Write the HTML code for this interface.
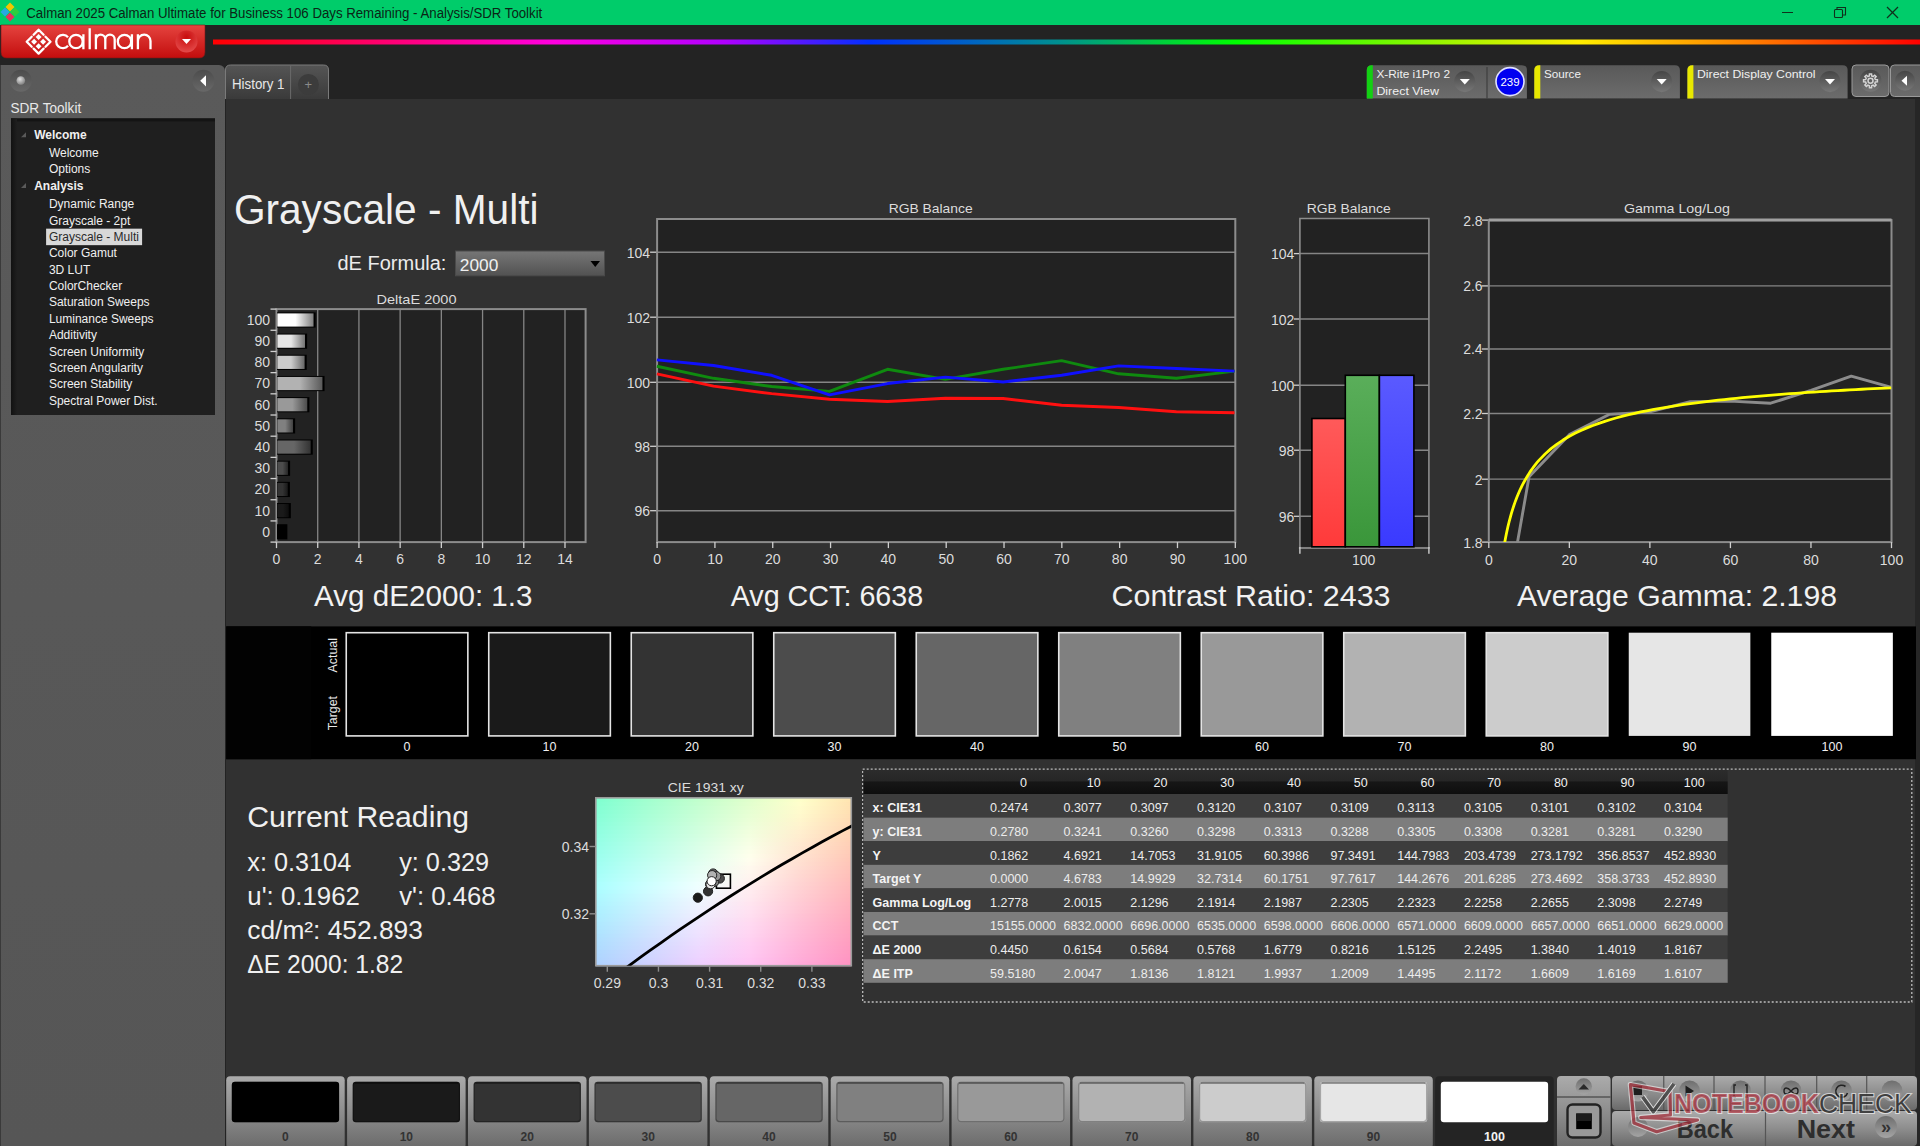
<!DOCTYPE html>
<html><head><meta charset="utf-8"><title>Calman - Grayscale Multi</title>
<style>
html,body{margin:0;padding:0;width:1920px;height:1146px;overflow:hidden;background:#232323;font-family:"Liberation Sans", sans-serif;}
#root{position:relative;width:1920px;height:1146px;}
svg{position:absolute;left:0;top:0;font-family:"Liberation Sans", sans-serif;}
</style></head><body><div id="root">
<div style="position:absolute;left:0px;top:0px;width:1920px;height:1146px;background:#232323"></div><div style="position:absolute;left:0px;top:0px;width:1920px;height:25px;background:#00cc6a"></div><div style="position:absolute;left:226px;top:99px;width:1689px;height:1047px;background:#313131"></div><div style="position:absolute;left:1915px;top:99px;width:5px;height:1047px;background:#262626"></div><div style="position:absolute;left:0px;top:65px;width:225px;height:1081px;background:linear-gradient(#5a5a5a,#565656);border-top-right-radius:6px;border-left:1px solid #3a3a3a;box-sizing:border-box"></div>
<svg width="1920" height="1146" viewBox="0 0 1920 1146"><defs><linearGradient id="gRed" x1="0" y1="0" x2="0" y2="1"><stop offset="0" stop-color="#e5443f"/><stop offset="1" stop-color="#c30d0d"/></linearGradient><radialGradient id="gRedBtn" cx="0.5" cy="0.3" r="0.7"><stop offset="0" stop-color="#c80c0c"/><stop offset="1" stop-color="#e44a4a"/></radialGradient><linearGradient id="gRain" x1="213" y1="0" x2="1920" y2="0" gradientUnits="userSpaceOnUse">
<stop offset="0" stop-color="#ff0000"/><stop offset="0.2" stop-color="#ff00e0"/><stop offset="0.3" stop-color="#b000ff"/>
<stop offset="0.385" stop-color="#0030ff"/><stop offset="0.496" stop-color="#00908f"/><stop offset="0.6" stop-color="#00ff00"/>
<stop offset="0.8" stop-color="#ffee00"/><stop offset="0.9" stop-color="#ff8000"/><stop offset="1" stop-color="#ff0000"/></linearGradient><linearGradient id="gKnob" x1="0" y1="0" x2="0" y2="1"><stop offset="0" stop-color="#4c4c4c"/><stop offset="1" stop-color="#686868"/></linearGradient><radialGradient id="gBall" cx="0.4" cy="0.35" r="0.6"><stop offset="0" stop-color="#e0e0e0"/><stop offset="1" stop-color="#8a8a8a"/></radialGradient><linearGradient id="gTreeL" x1="0" y1="0" x2="1" y2="0"><stop offset="0" stop-color="#111"/><stop offset="1" stop-color="#1f1f1f"/></linearGradient><linearGradient id="gTab" x1="0" y1="0" x2="0" y2="1"><stop offset="0" stop-color="#555"/><stop offset="1" stop-color="#3a3a3a"/></linearGradient><linearGradient id="gCtl" x1="0" y1="0" x2="0" y2="1"><stop offset="0" stop-color="#595959"/><stop offset="1" stop-color="#6c6c6c"/></linearGradient><linearGradient id="gDrop" x1="0" y1="0" x2="0" y2="1"><stop offset="0" stop-color="#454545"/><stop offset="1" stop-color="#777777"/></linearGradient><linearGradient id="gSel" x1="0" y1="0" x2="0" y2="1"><stop offset="0" stop-color="#767676"/><stop offset="1" stop-color="#525252"/></linearGradient><linearGradient id="gBar0" x1="0" y1="0" x2="1" y2="0"><stop offset="0" stop-color="rgb(0,0,0)"/><stop offset="0.5" stop-color="rgb(0,0,0)"/><stop offset="1" stop-color="rgb(0,0,0)"/></linearGradient><linearGradient id="gBar1" x1="0" y1="0" x2="1" y2="0"><stop offset="0" stop-color="rgb(26,26,26)"/><stop offset="0.5" stop-color="rgb(26,26,26)"/><stop offset="1" stop-color="rgb(13,13,13)"/></linearGradient><linearGradient id="gBar2" x1="0" y1="0" x2="1" y2="0"><stop offset="0" stop-color="rgb(51,51,51)"/><stop offset="0.5" stop-color="rgb(51,51,51)"/><stop offset="1" stop-color="rgb(25,25,25)"/></linearGradient><linearGradient id="gBar3" x1="0" y1="0" x2="1" y2="0"><stop offset="0" stop-color="rgb(76,76,76)"/><stop offset="0.5" stop-color="rgb(76,76,76)"/><stop offset="1" stop-color="rgb(38,38,38)"/></linearGradient><linearGradient id="gBar4" x1="0" y1="0" x2="1" y2="0"><stop offset="0" stop-color="rgb(102,102,102)"/><stop offset="0.5" stop-color="rgb(102,102,102)"/><stop offset="1" stop-color="rgb(51,51,51)"/></linearGradient><linearGradient id="gBar5" x1="0" y1="0" x2="1" y2="0"><stop offset="0" stop-color="rgb(128,128,128)"/><stop offset="0.5" stop-color="rgb(128,128,128)"/><stop offset="1" stop-color="rgb(64,64,64)"/></linearGradient><linearGradient id="gBar6" x1="0" y1="0" x2="1" y2="0"><stop offset="0" stop-color="rgb(153,153,153)"/><stop offset="0.5" stop-color="rgb(153,153,153)"/><stop offset="1" stop-color="rgb(76,76,76)"/></linearGradient><linearGradient id="gBar7" x1="0" y1="0" x2="1" y2="0"><stop offset="0" stop-color="rgb(178,178,178)"/><stop offset="0.5" stop-color="rgb(178,178,178)"/><stop offset="1" stop-color="rgb(89,89,89)"/></linearGradient><linearGradient id="gBar8" x1="0" y1="0" x2="1" y2="0"><stop offset="0" stop-color="rgb(204,204,204)"/><stop offset="0.5" stop-color="rgb(204,204,204)"/><stop offset="1" stop-color="rgb(102,102,102)"/></linearGradient><linearGradient id="gBar9" x1="0" y1="0" x2="1" y2="0"><stop offset="0" stop-color="rgb(230,230,230)"/><stop offset="0.5" stop-color="rgb(230,230,230)"/><stop offset="1" stop-color="rgb(115,115,115)"/></linearGradient><linearGradient id="gBar10" x1="0" y1="0" x2="1" y2="0"><stop offset="0" stop-color="rgb(255,255,255)"/><stop offset="0.5" stop-color="rgb(255,255,255)"/><stop offset="1" stop-color="rgb(127,127,127)"/></linearGradient><linearGradient id="gBr" x1="0" y1="0" x2="0" y2="1"><stop offset="0" stop-color="#ff5a5a"/><stop offset="1" stop-color="#ff3a3a"/></linearGradient><linearGradient id="gBg" x1="0" y1="0" x2="0" y2="1"><stop offset="0" stop-color="#5aae5a"/><stop offset="1" stop-color="#3a963a"/></linearGradient><linearGradient id="gBb" x1="0" y1="0" x2="0" y2="1"><stop offset="0" stop-color="#5a5aff"/><stop offset="1" stop-color="#3a3aff"/></linearGradient><linearGradient id="cs0"><stop offset="0.00" stop-color="#7fffd0"/><stop offset="0.20" stop-color="#a1ffcf"/><stop offset="0.40" stop-color="#c1ffcd"/><stop offset="0.60" stop-color="#e0ffcc"/><stop offset="0.80" stop-color="#feffca"/><stop offset="1.00" stop-color="#ffe4b1"/></linearGradient><linearGradient id="cs1"><stop offset="0.00" stop-color="#81ffd2"/><stop offset="0.20" stop-color="#a3ffd1"/><stop offset="0.40" stop-color="#c3ffcf"/><stop offset="0.60" stop-color="#e2ffce"/><stop offset="0.80" stop-color="#fffecc"/><stop offset="1.00" stop-color="#ffe2b1"/></linearGradient><linearGradient id="cs2"><stop offset="0.00" stop-color="#83ffd4"/><stop offset="0.20" stop-color="#a5ffd3"/><stop offset="0.40" stop-color="#c5ffd2"/><stop offset="0.60" stop-color="#e4ffd0"/><stop offset="0.80" stop-color="#fffccc"/><stop offset="1.00" stop-color="#ffe1b2"/></linearGradient><linearGradient id="cs3"><stop offset="0.00" stop-color="#85ffd6"/><stop offset="0.20" stop-color="#a7ffd5"/><stop offset="0.40" stop-color="#c7ffd4"/><stop offset="0.60" stop-color="#e6ffd3"/><stop offset="0.80" stop-color="#fffacd"/><stop offset="1.00" stop-color="#ffdfb2"/></linearGradient><linearGradient id="cs4"><stop offset="0.00" stop-color="#87ffd8"/><stop offset="0.20" stop-color="#a9ffd7"/><stop offset="0.40" stop-color="#c9ffd6"/><stop offset="0.60" stop-color="#e8ffd5"/><stop offset="0.80" stop-color="#fff8cd"/><stop offset="1.00" stop-color="#ffddb3"/></linearGradient><linearGradient id="cs5"><stop offset="0.00" stop-color="#89ffda"/><stop offset="0.20" stop-color="#abffd9"/><stop offset="0.40" stop-color="#cbffd8"/><stop offset="0.60" stop-color="#eaffd7"/><stop offset="0.80" stop-color="#fff6cd"/><stop offset="1.00" stop-color="#ffdbb3"/></linearGradient><linearGradient id="cs6"><stop offset="0.00" stop-color="#8bffdc"/><stop offset="0.20" stop-color="#adffdb"/><stop offset="0.40" stop-color="#cdffda"/><stop offset="0.60" stop-color="#ecffd9"/><stop offset="0.80" stop-color="#fff4ce"/><stop offset="1.00" stop-color="#ffd9b4"/></linearGradient><linearGradient id="cs7"><stop offset="0.00" stop-color="#8dffde"/><stop offset="0.20" stop-color="#afffde"/><stop offset="0.40" stop-color="#cfffdd"/><stop offset="0.60" stop-color="#eeffdc"/><stop offset="0.80" stop-color="#fff2ce"/><stop offset="1.00" stop-color="#ffd7b4"/></linearGradient><linearGradient id="cs8"><stop offset="0.00" stop-color="#8fffe1"/><stop offset="0.20" stop-color="#b1ffe0"/><stop offset="0.40" stop-color="#d1ffdf"/><stop offset="0.60" stop-color="#f1ffde"/><stop offset="0.80" stop-color="#ffefcf"/><stop offset="1.00" stop-color="#ffd5b4"/></linearGradient><linearGradient id="cs9"><stop offset="0.00" stop-color="#91ffe3"/><stop offset="0.20" stop-color="#b3ffe2"/><stop offset="0.40" stop-color="#d3ffe1"/><stop offset="0.60" stop-color="#f3ffe0"/><stop offset="0.80" stop-color="#ffedcf"/><stop offset="1.00" stop-color="#ffd3b5"/></linearGradient><linearGradient id="cs10"><stop offset="0.00" stop-color="#93ffe5"/><stop offset="0.20" stop-color="#b5ffe4"/><stop offset="0.40" stop-color="#d5ffe4"/><stop offset="0.60" stop-color="#f5ffe3"/><stop offset="0.80" stop-color="#ffebcf"/><stop offset="1.00" stop-color="#ffd1b5"/></linearGradient><linearGradient id="cs11"><stop offset="0.00" stop-color="#95ffe7"/><stop offset="0.20" stop-color="#b7ffe7"/><stop offset="0.40" stop-color="#d8ffe6"/><stop offset="0.60" stop-color="#f7ffe5"/><stop offset="0.80" stop-color="#ffe9d0"/><stop offset="1.00" stop-color="#ffcfb6"/></linearGradient><linearGradient id="cs12"><stop offset="0.00" stop-color="#97ffe9"/><stop offset="0.20" stop-color="#b9ffe9"/><stop offset="0.40" stop-color="#daffe8"/><stop offset="0.60" stop-color="#f9ffe8"/><stop offset="0.80" stop-color="#ffe7d0"/><stop offset="1.00" stop-color="#ffcdb6"/></linearGradient><linearGradient id="cs13"><stop offset="0.00" stop-color="#99ffec"/><stop offset="0.20" stop-color="#bbffeb"/><stop offset="0.40" stop-color="#dcffeb"/><stop offset="0.60" stop-color="#fcffea"/><stop offset="0.80" stop-color="#ffe5d0"/><stop offset="1.00" stop-color="#ffcbb7"/></linearGradient><linearGradient id="cs14"><stop offset="0.00" stop-color="#9bffee"/><stop offset="0.20" stop-color="#bdffed"/><stop offset="0.40" stop-color="#deffed"/><stop offset="0.60" stop-color="#feffec"/><stop offset="0.80" stop-color="#ffe3d1"/><stop offset="1.00" stop-color="#ffc9b7"/></linearGradient><linearGradient id="cs15"><stop offset="0.00" stop-color="#9dfff0"/><stop offset="0.20" stop-color="#bffff0"/><stop offset="0.40" stop-color="#e0ffef"/><stop offset="0.60" stop-color="#fffeee"/><stop offset="0.80" stop-color="#ffe1d1"/><stop offset="1.00" stop-color="#ffc7b7"/></linearGradient><linearGradient id="cs16"><stop offset="0.00" stop-color="#9ffff2"/><stop offset="0.20" stop-color="#c2fff2"/><stop offset="0.40" stop-color="#e2fff2"/><stop offset="0.60" stop-color="#fffcee"/><stop offset="0.80" stop-color="#ffdfd1"/><stop offset="1.00" stop-color="#ffc5b8"/></linearGradient><linearGradient id="cs17"><stop offset="0.00" stop-color="#a1fff4"/><stop offset="0.20" stop-color="#c4fff4"/><stop offset="0.40" stop-color="#e5fff4"/><stop offset="0.60" stop-color="#fff9ee"/><stop offset="0.80" stop-color="#ffddd2"/><stop offset="1.00" stop-color="#ffc3b8"/></linearGradient><linearGradient id="cs18"><stop offset="0.00" stop-color="#a3fff7"/><stop offset="0.20" stop-color="#c6fff7"/><stop offset="0.40" stop-color="#e7fff6"/><stop offset="0.60" stop-color="#fff7ef"/><stop offset="0.80" stop-color="#ffdad2"/><stop offset="1.00" stop-color="#ffc1b9"/></linearGradient><linearGradient id="cs19"><stop offset="0.00" stop-color="#a6fff9"/><stop offset="0.20" stop-color="#c8fff9"/><stop offset="0.40" stop-color="#e9fff9"/><stop offset="0.60" stop-color="#fff5ef"/><stop offset="0.80" stop-color="#ffd8d2"/><stop offset="1.00" stop-color="#ffbfb9"/></linearGradient><linearGradient id="cs20"><stop offset="0.00" stop-color="#a8fffb"/><stop offset="0.20" stop-color="#cafffb"/><stop offset="0.40" stop-color="#ebfffb"/><stop offset="0.60" stop-color="#fff3ef"/><stop offset="0.80" stop-color="#ffd6d3"/><stop offset="1.00" stop-color="#ffbdb9"/></linearGradient><linearGradient id="cs21"><stop offset="0.00" stop-color="#aafffe"/><stop offset="0.20" stop-color="#ccfffe"/><stop offset="0.40" stop-color="#eefffe"/><stop offset="0.60" stop-color="#fff1ef"/><stop offset="0.80" stop-color="#ffd4d3"/><stop offset="1.00" stop-color="#ffbbba"/></linearGradient><linearGradient id="cs22"><stop offset="0.00" stop-color="#abfeff"/><stop offset="0.20" stop-color="#cefeff"/><stop offset="0.40" stop-color="#effeff"/><stop offset="0.60" stop-color="#ffeeef"/><stop offset="0.80" stop-color="#ffd2d3"/><stop offset="1.00" stop-color="#ffb9ba"/></linearGradient><linearGradient id="cs23"><stop offset="0.00" stop-color="#abfcff"/><stop offset="0.20" stop-color="#cefcff"/><stop offset="0.40" stop-color="#effbff"/><stop offset="0.60" stop-color="#ffecf0"/><stop offset="0.80" stop-color="#ffd0d4"/><stop offset="1.00" stop-color="#ffb7bb"/></linearGradient><linearGradient id="cs24"><stop offset="0.00" stop-color="#acf9ff"/><stop offset="0.20" stop-color="#cef9ff"/><stop offset="0.40" stop-color="#eff9ff"/><stop offset="0.60" stop-color="#ffeaf0"/><stop offset="0.80" stop-color="#ffced4"/><stop offset="1.00" stop-color="#ffb5bb"/></linearGradient><linearGradient id="cs25"><stop offset="0.00" stop-color="#acf7ff"/><stop offset="0.20" stop-color="#cef7ff"/><stop offset="0.40" stop-color="#eef6ff"/><stop offset="0.60" stop-color="#ffe8f0"/><stop offset="0.80" stop-color="#ffccd4"/><stop offset="1.00" stop-color="#ffb3bb"/></linearGradient><linearGradient id="cs26"><stop offset="0.00" stop-color="#acf5ff"/><stop offset="0.20" stop-color="#cef4ff"/><stop offset="0.40" stop-color="#eef4ff"/><stop offset="0.60" stop-color="#ffe5f0"/><stop offset="0.80" stop-color="#ffcad5"/><stop offset="1.00" stop-color="#ffb1bc"/></linearGradient><linearGradient id="cs27"><stop offset="0.00" stop-color="#acf2ff"/><stop offset="0.20" stop-color="#cef2ff"/><stop offset="0.40" stop-color="#eef2ff"/><stop offset="0.60" stop-color="#ffe3f1"/><stop offset="0.80" stop-color="#ffc8d5"/><stop offset="1.00" stop-color="#ffafbc"/></linearGradient><linearGradient id="cs28"><stop offset="0.00" stop-color="#acf0ff"/><stop offset="0.20" stop-color="#cef0ff"/><stop offset="0.40" stop-color="#eeefff"/><stop offset="0.60" stop-color="#ffe1f1"/><stop offset="0.80" stop-color="#ffc6d5"/><stop offset="1.00" stop-color="#ffadbd"/></linearGradient><linearGradient id="cs29"><stop offset="0.00" stop-color="#aceeff"/><stop offset="0.20" stop-color="#ceedff"/><stop offset="0.40" stop-color="#eeedff"/><stop offset="0.60" stop-color="#ffdff1"/><stop offset="0.80" stop-color="#ffc3d5"/><stop offset="1.00" stop-color="#ffabbd"/></linearGradient><linearGradient id="cs30"><stop offset="0.00" stop-color="#adecff"/><stop offset="0.20" stop-color="#ceebff"/><stop offset="0.40" stop-color="#eeeaff"/><stop offset="0.60" stop-color="#ffdcf1"/><stop offset="0.80" stop-color="#ffc1d6"/><stop offset="1.00" stop-color="#ffa9bd"/></linearGradient><linearGradient id="cs31"><stop offset="0.00" stop-color="#ade9ff"/><stop offset="0.20" stop-color="#cee9ff"/><stop offset="0.40" stop-color="#eee8ff"/><stop offset="0.60" stop-color="#ffdaf2"/><stop offset="0.80" stop-color="#ffbfd6"/><stop offset="1.00" stop-color="#ffa7be"/></linearGradient><linearGradient id="cs32"><stop offset="0.00" stop-color="#ade7ff"/><stop offset="0.20" stop-color="#cee6ff"/><stop offset="0.40" stop-color="#eee5ff"/><stop offset="0.60" stop-color="#ffd8f2"/><stop offset="0.80" stop-color="#ffbdd6"/><stop offset="1.00" stop-color="#ffa5be"/></linearGradient><linearGradient id="cs33"><stop offset="0.00" stop-color="#ade5ff"/><stop offset="0.20" stop-color="#cee4ff"/><stop offset="0.40" stop-color="#eee3ff"/><stop offset="0.60" stop-color="#ffd6f2"/><stop offset="0.80" stop-color="#ffbbd7"/><stop offset="1.00" stop-color="#ffa3be"/></linearGradient><linearGradient id="cs34"><stop offset="0.00" stop-color="#ade2ff"/><stop offset="0.20" stop-color="#cee2ff"/><stop offset="0.40" stop-color="#ede1ff"/><stop offset="0.60" stop-color="#ffd4f2"/><stop offset="0.80" stop-color="#ffb9d7"/><stop offset="1.00" stop-color="#ffa1bf"/></linearGradient><linearGradient id="cs35"><stop offset="0.00" stop-color="#aee0ff"/><stop offset="0.20" stop-color="#cedfff"/><stop offset="0.40" stop-color="#eddeff"/><stop offset="0.60" stop-color="#ffd1f2"/><stop offset="0.80" stop-color="#ffb7d7"/><stop offset="1.00" stop-color="#ff9fbf"/></linearGradient><linearGradient id="cs36"><stop offset="0.00" stop-color="#aedeff"/><stop offset="0.20" stop-color="#ceddff"/><stop offset="0.40" stop-color="#eddcff"/><stop offset="0.60" stop-color="#ffcff3"/><stop offset="0.80" stop-color="#ffb5d8"/><stop offset="1.00" stop-color="#ff9dbf"/></linearGradient><linearGradient id="cs37"><stop offset="0.00" stop-color="#aedcff"/><stop offset="0.20" stop-color="#cedbff"/><stop offset="0.40" stop-color="#edd9ff"/><stop offset="0.60" stop-color="#ffcdf3"/><stop offset="0.80" stop-color="#ffb3d8"/><stop offset="1.00" stop-color="#ff9bc0"/></linearGradient><linearGradient id="cs38"><stop offset="0.00" stop-color="#aed9ff"/><stop offset="0.20" stop-color="#ced8ff"/><stop offset="0.40" stop-color="#edd7ff"/><stop offset="0.60" stop-color="#ffcbf3"/><stop offset="0.80" stop-color="#ffb1d8"/><stop offset="1.00" stop-color="#ff99c0"/></linearGradient><linearGradient id="cs39"><stop offset="0.00" stop-color="#aed7ff"/><stop offset="0.20" stop-color="#ced6ff"/><stop offset="0.40" stop-color="#edd5ff"/><stop offset="0.60" stop-color="#ffc9f3"/><stop offset="0.80" stop-color="#ffafd8"/><stop offset="1.00" stop-color="#ff97c1"/></linearGradient><linearGradient id="cs40"><stop offset="0.00" stop-color="#aed5ff"/><stop offset="0.20" stop-color="#ced4ff"/><stop offset="0.40" stop-color="#edd2ff"/><stop offset="0.60" stop-color="#ffc6f3"/><stop offset="0.80" stop-color="#ffadd9"/><stop offset="1.00" stop-color="#ff95c1"/></linearGradient><linearGradient id="cs41"><stop offset="0.00" stop-color="#aed3ff"/><stop offset="0.20" stop-color="#ced1ff"/><stop offset="0.40" stop-color="#edd0ff"/><stop offset="0.60" stop-color="#ffc4f4"/><stop offset="0.80" stop-color="#ffaad9"/><stop offset="1.00" stop-color="#ff93c1"/></linearGradient><linearGradient id="gHdr" x1="0" y1="0" x2="0" y2="1"><stop offset="0" stop-color="#2c2c2c"/><stop offset="0.45" stop-color="#262626"/><stop offset="0.5" stop-color="#161616"/><stop offset="1" stop-color="#0e0e0e"/></linearGradient><linearGradient id="gBtn" x1="0" y1="0" x2="0" y2="1"><stop offset="0" stop-color="#ababab"/><stop offset="0.55" stop-color="#8a8a8a"/><stop offset="1" stop-color="#6a6a6a"/></linearGradient><linearGradient id="gNavK" x1="0" y1="0" x2="0" y2="1"><stop offset="0" stop-color="#6e6e6e"/><stop offset="1" stop-color="#a4a4a4"/></linearGradient></defs>
<rect x="6.8" y="3.8" width="6.4" height="6.4" fill="#f2c500" transform="rotate(45 10 7)"/>
<rect x="1.8" y="8.8" width="6.4" height="6.4" fill="#27a9e1" transform="rotate(45 5 12)"/>
<rect x="11.8" y="8.8" width="6.4" height="6.4" fill="#2ecc40" transform="rotate(45 15 12)"/>
<rect x="6.8" y="13.8" width="6.4" height="6.4" fill="#e8305a" transform="rotate(45 10 17)"/>
<text x="26.30" y="17.60" font-size="14" fill="#0b2516" textLength="516.0" lengthAdjust="spacingAndGlyphs" >Calman 2025 Calman Ultimate for Business 106 Days Remaining  - Analysis/SDR Toolkit</text>
<line x1="1782.00" y1="12.50" x2="1793.00" y2="12.50" stroke="#10301c" stroke-width="1" />
<rect x="1834.5" y="9.5" width="8" height="8" fill="none" stroke="#10301c" stroke-width="1.1" rx="1"/>
<path d="M1837 9.5 V7.5 H1845.5 V15 H1842.5" fill="none" stroke="#10301c" stroke-width="1.1"/>
<line x1="1887.00" y1="7.00" x2="1898.00" y2="18.00" stroke="#10301c" stroke-width="1.2" />
<line x1="1898.00" y1="7.00" x2="1887.00" y2="18.00" stroke="#10301c" stroke-width="1.2" />
<path d="M1 25 H205 V52 Q205 58 199 58 H7 Q1 58 1 52 Z" fill="url(#gRed)" stroke="#7a1a1a" stroke-width="0.6"/>
<path d="M33.60 34.80 L38.60 29.80 L43.60 34.80 M45.50 36.70 L50.50 41.70 L45.50 46.70 M43.60 48.60 L38.60 53.60 L33.60 48.60 M31.70 46.70 L26.70 41.70 L31.70 36.70" fill="none" stroke="#fff" stroke-width="2.3" stroke-linecap="round" stroke-linejoin="round"/>
<rect x="32.00" y="39.60" width="4.2" height="4.2" fill="#fff" transform="rotate(45 34.10 41.70)"/>
<rect x="41.00" y="39.60" width="4.2" height="4.2" fill="#fff" transform="rotate(45 43.10 41.70)"/>
<rect x="36.50" y="34.90" width="4.2" height="4.2" fill="#fff" transform="rotate(45 38.60 37.00)"/>
<rect x="36.50" y="44.10" width="4.2" height="4.2" fill="#fff" transform="rotate(45 38.60 46.20)"/>
<path d="M68.03 37.19 A6.7 6.7 0 1 0 68.03 45.81 M82.7 41.5 A6.7 6.7 0 1 0 69.3 41.5 A6.7 6.7 0 1 0 82.7 41.5 M83.4 34.2 V49.3 M89.7 28.2 V49.3 M95.9 34.2 V49.3 M95.9 39.4 A4.7 4.7 0 0 1 105.3 39.4 V49.3 M105.3 39.4 A4.7 4.7 0 0 1 114.7 39.4 V49.3 M131.2 41.5 A6.7 6.7 0 1 0 117.8 41.5 A6.7 6.7 0 1 0 131.2 41.5 M131.9 34.2 V49.3 M137.9 34.2 V49.3 M137.9 41 A6.3 6.3 0 0 1 150.5 41 V49.3" fill="none" stroke="#fff" stroke-width="2.3"/>
<circle cx="186.5" cy="41.5" r="11" fill="url(#gRedBtn)"/>
<path d="M182 39 H191 L186.5 44 Z" fill="#fff"/>
<rect x="213.00" y="39.50" width="1707.00" height="5.00" fill="url(#gRain)" />
<circle cx="20.8" cy="80.8" r="11" fill="url(#gKnob)"/>
<circle cx="20.8" cy="80.5" r="4.3" fill="url(#gBall)"/>
<circle cx="203.4" cy="80.8" r="11" fill="url(#gKnob)"/>
<path d="M200.2 80.8 L206 75.2 V86.4 Z" fill="#fff"/>
<text x="10.40" y="113.10" font-size="14" fill="#e8e8e8" textLength="70.8" lengthAdjust="spacingAndGlyphs" >SDR Toolkit</text>
<rect x="11.00" y="118.40" width="204.00" height="296.60" fill="#1f1f1f" />
<rect x="11.00" y="118.40" width="204.00" height="3.00" fill="#141414" />
<rect x="11.00" y="118.40" width="6.00" height="296.60" fill="url(#gTreeL)" />
<text x="34.20" y="138.80" font-size="12" fill="#f0f0f0" font-weight="bold" >Welcome</text>
<text x="48.90" y="156.50" font-size="12" fill="#f0f0f0" >Welcome</text>
<text x="48.90" y="173.00" font-size="12" fill="#f0f0f0" >Options</text>
<text x="34.20" y="189.50" font-size="12" fill="#f0f0f0" font-weight="bold" >Analysis</text>
<text x="48.90" y="208.20" font-size="12" fill="#f0f0f0" >Dynamic Range</text>
<text x="48.90" y="224.58" font-size="12" fill="#f0f0f0" >Grayscale - 2pt</text>
<rect x="46.10" y="228.66" width="96.00" height="16.50" fill="#d8d8d8" />
<text x="48.90" y="240.96" font-size="12" fill="#2a2a2a" >Grayscale - Multi</text>
<text x="48.90" y="257.34" font-size="12" fill="#f0f0f0" >Color Gamut</text>
<text x="48.90" y="273.72" font-size="12" fill="#f0f0f0" >3D LUT</text>
<text x="48.90" y="290.10" font-size="12" fill="#f0f0f0" >ColorChecker</text>
<text x="48.90" y="306.48" font-size="12" fill="#f0f0f0" >Saturation Sweeps</text>
<text x="48.90" y="322.86" font-size="12" fill="#f0f0f0" >Luminance Sweeps</text>
<text x="48.90" y="339.24" font-size="12" fill="#f0f0f0" >Additivity</text>
<text x="48.90" y="355.62" font-size="12" fill="#f0f0f0" >Screen Uniformity</text>
<text x="48.90" y="372.00" font-size="12" fill="#f0f0f0" >Screen Angularity</text>
<text x="48.90" y="388.38" font-size="12" fill="#f0f0f0" >Screen Stability</text>
<text x="48.90" y="404.76" font-size="12" fill="#f0f0f0" >Spectral Power Dist.</text>
<path d="M21 137.3 L26 137.3 L26 132.3 Z" fill="#5a5a5a"/>
<path d="M21 188.0 L26 188.0 L26 183.0 Z" fill="#5a5a5a"/>
<path d="M225.5 99 V70 Q225.5 65 230.5 65 H323.5 Q328.5 65 328.5 70 V99 Z" fill="url(#gTab)"/>
<path d="M225.5 99 V70 Q225.5 65 230.5 65 H323.5 Q328.5 65 328.5 70 V99" fill="none" stroke="#7a7a7a" stroke-width="1"/>
<line x1="290.60" y1="65.50" x2="290.60" y2="99.00" stroke="#6a6a6a" stroke-width="1" />
<text x="232.00" y="88.50" font-size="14" fill="#e8e8e8" textLength="52.5" lengthAdjust="spacingAndGlyphs" >History 1</text>
<circle cx="308.4" cy="84.5" r="10.5" fill="#3c3c3c"/>
<text x="308.40" y="89.00" font-size="13" fill="#8a8a8a" text-anchor="middle" >+</text>
<path d="M1366.8 98.5 V70 Q1366.8 65.2 1371.8 65.2 H1521.9 Q1526.9 65.2 1526.9 70 V98.5 Z" fill="url(#gCtl)"/>
<path d="M1366.8 98.5 V70 Q1366.8 65.2 1371.8 65.2 H1372.8 V98.5 Z" fill="#12d012"/>
<text x="1376.40" y="77.80" font-size="11.5" fill="#f0f0f0" textLength="73.6" lengthAdjust="spacingAndGlyphs" >X-Rite i1Pro 2</text>
<text x="1376.40" y="94.50" font-size="11.5" fill="#f0f0f0" textLength="62.6" lengthAdjust="spacingAndGlyphs" >Direct View</text>
<circle cx="1464.8" cy="81.6" r="10.6" fill="url(#gDrop)"/>
<path d="M1459.8 79 H1469.8 L1464.8 84.5 Z" fill="#fff"/>
<line x1="1487.00" y1="67.00" x2="1487.00" y2="98.50" stroke="#3e3e3e" stroke-width="1.2" />
<circle cx="1510" cy="81.6" r="14" fill="#0000f0" stroke="#e0e0ff" stroke-width="1.6"/>
<text x="1510.00" y="85.60" font-size="11.5" fill="#ffffff" text-anchor="middle" >239</text>
<path d="M1534.3 98.5 V70 Q1534.3 65.2 1539.3 65.2 H1674.9 Q1679.9 65.2 1679.9 70 V98.5 Z" fill="url(#gCtl)"/>
<path d="M1534.3 98.5 V70 Q1534.3 65.2 1539.3 65.2 H1540.3 V98.5 Z" fill="#e8e800"/>
<text x="1543.90" y="77.80" font-size="11.5" fill="#f0f0f0" textLength="37.0" lengthAdjust="spacingAndGlyphs" >Source</text>
<circle cx="1661.7" cy="81.6" r="10.6" fill="url(#gDrop)"/>
<path d="M1656.7 79 H1666.7 L1661.7 84.5 Z" fill="#fff"/>
<path d="M1687.4 98.5 V70 Q1687.4 65.2 1692.4 65.2 H1842.6 Q1847.6 65.2 1847.6 70 V98.5 Z" fill="url(#gCtl)"/>
<path d="M1687.4 98.5 V70 Q1687.4 65.2 1692.4 65.2 H1693.4 V98.5 Z" fill="#e8e800"/>
<text x="1697.00" y="77.80" font-size="11.5" fill="#f0f0f0" textLength="118.6" lengthAdjust="spacingAndGlyphs" >Direct Display Control</text>
<circle cx="1830" cy="81.6" r="10.6" fill="url(#gDrop)"/>
<path d="M1825 79 H1835 L1830 84.5 Z" fill="#fff"/>
<rect x="1852" y="65" width="37" height="31.5" rx="4" fill="url(#gCtl)" stroke="#9a9a9a" stroke-width="1"/>
<circle cx="1870.5" cy="80.8" r="11" fill="url(#gDrop)"/>
<g transform="translate(1870.5 80.8)" fill="none" stroke="#d4d4d4" stroke-width="1.5"><path d="M4.86 -1.19 L6.92 -1.05 L6.92 1.05 L4.86 1.19 L4.27 2.59 L5.63 4.15 L4.15 5.63 L2.59 4.27 L1.19 4.86 L1.05 6.92 L-1.05 6.92 L-1.19 4.86 L-2.59 4.27 L-4.15 5.63 L-5.63 4.15 L-4.27 2.59 L-4.86 1.19 L-6.92 1.05 L-6.92 -1.05 L-4.86 -1.19 L-4.27 -2.59 L-5.63 -4.15 L-4.15 -5.63 L-2.59 -4.27 L-1.19 -4.86 L-1.05 -6.92 L1.05 -6.92 L1.19 -4.86 L2.59 -4.27 L4.15 -5.63 L5.63 -4.15 L4.27 -2.59 Z"/><circle r="2.5"/></g>
<rect x="1890.5" y="65" width="35" height="31.5" rx="4" fill="url(#gCtl)" stroke="#9a9a9a" stroke-width="1"/>
<circle cx="1905" cy="80.8" r="10" fill="url(#gDrop)"/>
<path d="M1901.5 80.8 L1907 75.8 V85.8 Z" fill="#fff"/>
<text x="233.90" y="223.75" font-size="42" fill="#f0f0f0" textLength="304.6" lengthAdjust="spacingAndGlyphs" >Grayscale - Multi</text>
<text x="337.50" y="270.00" font-size="20" fill="#ececec" textLength="108.9" lengthAdjust="spacingAndGlyphs" >dE Formula:</text>
<rect x="455.5" y="251" width="149" height="24.8" fill="url(#gSel)" stroke="#4a4a4a" stroke-width="1"/>
<text x="459.80" y="270.60" font-size="17" fill="#f0f0f0" textLength="38.5" lengthAdjust="spacingAndGlyphs" >2000</text>
<path d="M590.5 261 H600 L595.25 267 Z" fill="#000"/>
<rect x="276.50" y="309.10" width="309.10" height="233.00" fill="#222222" />
<line x1="317.71" y1="309.10" x2="317.71" y2="542.10" stroke="#858585" stroke-width="1.3" />
<line x1="358.93" y1="309.10" x2="358.93" y2="542.10" stroke="#858585" stroke-width="1.3" />
<line x1="400.14" y1="309.10" x2="400.14" y2="542.10" stroke="#858585" stroke-width="1.3" />
<line x1="441.35" y1="309.10" x2="441.35" y2="542.10" stroke="#858585" stroke-width="1.3" />
<line x1="482.57" y1="309.10" x2="482.57" y2="542.10" stroke="#858585" stroke-width="1.3" />
<line x1="523.78" y1="309.10" x2="523.78" y2="542.10" stroke="#858585" stroke-width="1.3" />
<line x1="564.99" y1="309.10" x2="564.99" y2="542.10" stroke="#858585" stroke-width="1.3" />
<rect x="276.50" y="309.10" width="309.10" height="233.00" fill="none" stroke="#8c8c8c" stroke-width="2"/>
<text x="416.50" y="303.60" font-size="13" fill="#dcdcdc" text-anchor="middle" textLength="80.0" lengthAdjust="spacingAndGlyphs" >DeltaE 2000</text>
<rect x="277.00" y="524.21" width="10.37" height="15.20" fill="#000" />
<rect x="277.30" y="525.21" width="7.97" height="13.20" fill="url(#gBar0)" />
<rect x="277.00" y="503.03" width="13.88" height="15.20" fill="#000" />
<rect x="277.30" y="504.03" width="11.48" height="13.20" fill="url(#gBar1)" />
<rect x="277.00" y="481.85" width="12.91" height="15.20" fill="#000" />
<rect x="277.30" y="482.85" width="10.51" height="13.20" fill="url(#gBar2)" />
<rect x="277.00" y="460.66" width="13.09" height="15.20" fill="#000" />
<rect x="277.30" y="461.66" width="10.69" height="13.20" fill="url(#gBar3)" />
<rect x="277.00" y="439.48" width="35.78" height="15.20" fill="#000" />
<rect x="277.30" y="440.48" width="33.38" height="13.20" fill="url(#gBar4)" />
<rect x="277.00" y="418.30" width="18.13" height="15.20" fill="#000" />
<rect x="277.30" y="419.30" width="15.73" height="13.20" fill="url(#gBar5)" />
<rect x="277.00" y="397.12" width="32.37" height="15.20" fill="#000" />
<rect x="277.30" y="398.12" width="29.97" height="13.20" fill="url(#gBar6)" />
<rect x="277.00" y="375.94" width="47.55" height="15.20" fill="#000" />
<rect x="277.30" y="376.94" width="45.15" height="13.20" fill="url(#gBar7)" />
<rect x="277.00" y="354.75" width="29.72" height="15.20" fill="#000" />
<rect x="277.30" y="355.75" width="27.32" height="13.20" fill="url(#gBar8)" />
<rect x="277.00" y="333.57" width="30.09" height="15.20" fill="#000" />
<rect x="277.30" y="334.57" width="27.69" height="13.20" fill="url(#gBar9)" />
<rect x="277.00" y="312.39" width="38.64" height="15.20" fill="#000" />
<rect x="277.30" y="313.39" width="36.24" height="13.20" fill="url(#gBar10)" />
<line x1="270.50" y1="542.10" x2="276.50" y2="542.10" stroke="#d0d0d0" stroke-width="1.3" />
<line x1="270.50" y1="520.92" x2="276.50" y2="520.92" stroke="#d0d0d0" stroke-width="1.3" />
<line x1="270.50" y1="499.74" x2="276.50" y2="499.74" stroke="#d0d0d0" stroke-width="1.3" />
<line x1="270.50" y1="478.55" x2="276.50" y2="478.55" stroke="#d0d0d0" stroke-width="1.3" />
<line x1="270.50" y1="457.37" x2="276.50" y2="457.37" stroke="#d0d0d0" stroke-width="1.3" />
<line x1="270.50" y1="436.19" x2="276.50" y2="436.19" stroke="#d0d0d0" stroke-width="1.3" />
<line x1="270.50" y1="415.01" x2="276.50" y2="415.01" stroke="#d0d0d0" stroke-width="1.3" />
<line x1="270.50" y1="393.83" x2="276.50" y2="393.83" stroke="#d0d0d0" stroke-width="1.3" />
<line x1="270.50" y1="372.65" x2="276.50" y2="372.65" stroke="#d0d0d0" stroke-width="1.3" />
<line x1="270.50" y1="351.46" x2="276.50" y2="351.46" stroke="#d0d0d0" stroke-width="1.3" />
<line x1="270.50" y1="330.28" x2="276.50" y2="330.28" stroke="#d0d0d0" stroke-width="1.3" />
<line x1="270.50" y1="309.10" x2="276.50" y2="309.10" stroke="#d0d0d0" stroke-width="1.3" />
<text x="270.00" y="536.71" font-size="14" fill="#dcdcdc" text-anchor="end" >0</text>
<text x="270.00" y="515.53" font-size="14" fill="#dcdcdc" text-anchor="end" >10</text>
<text x="270.00" y="494.35" font-size="14" fill="#dcdcdc" text-anchor="end" >20</text>
<text x="270.00" y="473.16" font-size="14" fill="#dcdcdc" text-anchor="end" >30</text>
<text x="270.00" y="451.98" font-size="14" fill="#dcdcdc" text-anchor="end" >40</text>
<text x="270.00" y="430.80" font-size="14" fill="#dcdcdc" text-anchor="end" >50</text>
<text x="270.00" y="409.62" font-size="14" fill="#dcdcdc" text-anchor="end" >60</text>
<text x="270.00" y="388.44" font-size="14" fill="#dcdcdc" text-anchor="end" >70</text>
<text x="270.00" y="367.25" font-size="14" fill="#dcdcdc" text-anchor="end" >80</text>
<text x="270.00" y="346.07" font-size="14" fill="#dcdcdc" text-anchor="end" >90</text>
<text x="270.00" y="324.89" font-size="14" fill="#dcdcdc" text-anchor="end" >100</text>
<line x1="276.50" y1="542.10" x2="276.50" y2="548.10" stroke="#d0d0d0" stroke-width="1.3" />
<text x="276.50" y="563.90" font-size="14" fill="#dcdcdc" text-anchor="middle" >0</text>
<line x1="317.71" y1="542.10" x2="317.71" y2="548.10" stroke="#d0d0d0" stroke-width="1.3" />
<text x="317.71" y="563.90" font-size="14" fill="#dcdcdc" text-anchor="middle" >2</text>
<line x1="358.93" y1="542.10" x2="358.93" y2="548.10" stroke="#d0d0d0" stroke-width="1.3" />
<text x="358.93" y="563.90" font-size="14" fill="#dcdcdc" text-anchor="middle" >4</text>
<line x1="400.14" y1="542.10" x2="400.14" y2="548.10" stroke="#d0d0d0" stroke-width="1.3" />
<text x="400.14" y="563.90" font-size="14" fill="#dcdcdc" text-anchor="middle" >6</text>
<line x1="441.35" y1="542.10" x2="441.35" y2="548.10" stroke="#d0d0d0" stroke-width="1.3" />
<text x="441.35" y="563.90" font-size="14" fill="#dcdcdc" text-anchor="middle" >8</text>
<line x1="482.57" y1="542.10" x2="482.57" y2="548.10" stroke="#d0d0d0" stroke-width="1.3" />
<text x="482.57" y="563.90" font-size="14" fill="#dcdcdc" text-anchor="middle" >10</text>
<line x1="523.78" y1="542.10" x2="523.78" y2="548.10" stroke="#d0d0d0" stroke-width="1.3" />
<text x="523.78" y="563.90" font-size="14" fill="#dcdcdc" text-anchor="middle" >12</text>
<line x1="564.99" y1="542.10" x2="564.99" y2="548.10" stroke="#d0d0d0" stroke-width="1.3" />
<text x="564.99" y="563.90" font-size="14" fill="#dcdcdc" text-anchor="middle" >14</text>
<text x="423.30" y="606.00" font-size="29" fill="#f2f2f2" text-anchor="middle" textLength="218.4" lengthAdjust="spacingAndGlyphs" >Avg dE2000: 1.3</text>
<rect x="657.10" y="219.00" width="578.20" height="323.10" fill="#222222" />
<line x1="657.10" y1="510.70" x2="1235.30" y2="510.70" stroke="#858585" stroke-width="1.5" />
<line x1="650.10" y1="510.70" x2="657.10" y2="510.70" stroke="#d0d0d0" stroke-width="1.3" />
<text x="650.10" y="516.30" font-size="14" fill="#dcdcdc" text-anchor="end" >96</text>
<line x1="657.10" y1="446.30" x2="1235.30" y2="446.30" stroke="#858585" stroke-width="1.5" />
<line x1="650.10" y1="446.30" x2="657.10" y2="446.30" stroke="#d0d0d0" stroke-width="1.3" />
<text x="650.10" y="451.90" font-size="14" fill="#dcdcdc" text-anchor="end" >98</text>
<line x1="657.10" y1="382.30" x2="1235.30" y2="382.30" stroke="#858585" stroke-width="1.5" />
<line x1="650.10" y1="382.30" x2="657.10" y2="382.30" stroke="#d0d0d0" stroke-width="1.3" />
<text x="650.10" y="387.90" font-size="14" fill="#dcdcdc" text-anchor="end" >100</text>
<line x1="657.10" y1="317.20" x2="1235.30" y2="317.20" stroke="#858585" stroke-width="1.5" />
<line x1="650.10" y1="317.20" x2="657.10" y2="317.20" stroke="#d0d0d0" stroke-width="1.3" />
<text x="650.10" y="322.80" font-size="14" fill="#dcdcdc" text-anchor="end" >102</text>
<line x1="657.10" y1="252.20" x2="1235.30" y2="252.20" stroke="#858585" stroke-width="1.5" />
<line x1="650.10" y1="252.20" x2="657.10" y2="252.20" stroke="#d0d0d0" stroke-width="1.3" />
<text x="650.10" y="257.80" font-size="14" fill="#dcdcdc" text-anchor="end" >104</text>
<rect x="657.10" y="219.00" width="578.20" height="323.10" fill="none" stroke="#8c8c8c" stroke-width="2"/>
<text x="930.70" y="213.30" font-size="13" fill="#dcdcdc" text-anchor="middle" textLength="84.0" lengthAdjust="spacingAndGlyphs" >RGB Balance</text>
<polyline points="656.89,366.29 713.53,378.30 771.67,386.55 829.43,391.43 887.57,369.29 945.33,379.42 1003.10,369.29 1061.61,360.67 1118.63,373.80 1176.39,378.30 1234.53,371.17" fill="none" stroke="#0f8a0f" stroke-width="2.9" stroke-linejoin="round" />
<polyline points="656.89,373.80 713.53,386.17 771.67,393.68 829.43,399.30 887.57,401.55 945.33,398.18 1003.10,398.55 1061.61,405.30 1118.63,407.55 1176.39,411.68 1234.53,412.81" fill="none" stroke="#ff1010" stroke-width="2.9" stroke-linejoin="round" />
<polyline points="656.89,359.92 713.53,365.54 771.67,375.30 829.43,394.80 887.57,383.55 945.33,377.17 1003.10,382.05 1061.61,375.30 1118.63,365.92 1176.39,368.54 1234.53,371.17" fill="none" stroke="#1010ff" stroke-width="2.9" stroke-linejoin="round" />
<line x1="657.10" y1="542.10" x2="657.10" y2="548.10" stroke="#d0d0d0" stroke-width="1.3" />
<text x="657.10" y="563.80" font-size="14" fill="#dcdcdc" text-anchor="middle" >0</text>
<line x1="714.92" y1="542.10" x2="714.92" y2="548.10" stroke="#d0d0d0" stroke-width="1.3" />
<text x="714.92" y="563.80" font-size="14" fill="#dcdcdc" text-anchor="middle" >10</text>
<line x1="772.74" y1="542.10" x2="772.74" y2="548.10" stroke="#d0d0d0" stroke-width="1.3" />
<text x="772.74" y="563.80" font-size="14" fill="#dcdcdc" text-anchor="middle" >20</text>
<line x1="830.56" y1="542.10" x2="830.56" y2="548.10" stroke="#d0d0d0" stroke-width="1.3" />
<text x="830.56" y="563.80" font-size="14" fill="#dcdcdc" text-anchor="middle" >30</text>
<line x1="888.38" y1="542.10" x2="888.38" y2="548.10" stroke="#d0d0d0" stroke-width="1.3" />
<text x="888.38" y="563.80" font-size="14" fill="#dcdcdc" text-anchor="middle" >40</text>
<line x1="946.20" y1="542.10" x2="946.20" y2="548.10" stroke="#d0d0d0" stroke-width="1.3" />
<text x="946.20" y="563.80" font-size="14" fill="#dcdcdc" text-anchor="middle" >50</text>
<line x1="1004.02" y1="542.10" x2="1004.02" y2="548.10" stroke="#d0d0d0" stroke-width="1.3" />
<text x="1004.02" y="563.80" font-size="14" fill="#dcdcdc" text-anchor="middle" >60</text>
<line x1="1061.84" y1="542.10" x2="1061.84" y2="548.10" stroke="#d0d0d0" stroke-width="1.3" />
<text x="1061.84" y="563.80" font-size="14" fill="#dcdcdc" text-anchor="middle" >70</text>
<line x1="1119.66" y1="542.10" x2="1119.66" y2="548.10" stroke="#d0d0d0" stroke-width="1.3" />
<text x="1119.66" y="563.80" font-size="14" fill="#dcdcdc" text-anchor="middle" >80</text>
<line x1="1177.48" y1="542.10" x2="1177.48" y2="548.10" stroke="#d0d0d0" stroke-width="1.3" />
<text x="1177.48" y="563.80" font-size="14" fill="#dcdcdc" text-anchor="middle" >90</text>
<line x1="1235.30" y1="542.10" x2="1235.30" y2="548.10" stroke="#d0d0d0" stroke-width="1.3" />
<text x="1235.30" y="563.80" font-size="14" fill="#dcdcdc" text-anchor="middle" >100</text>
<text x="827.00" y="606.00" font-size="29" fill="#f2f2f2" text-anchor="middle" textLength="192.6" lengthAdjust="spacingAndGlyphs" >Avg CCT: 6638</text>
<rect x="1299.90" y="218.50" width="129.00" height="328.30" fill="#222222" />
<line x1="1299.90" y1="516.30" x2="1428.90" y2="516.30" stroke="#858585" stroke-width="1.5" />
<line x1="1293.90" y1="516.30" x2="1299.90" y2="516.30" stroke="#d0d0d0" stroke-width="1.3" />
<text x="1294.30" y="521.90" font-size="14" fill="#dcdcdc" text-anchor="end" >96</text>
<line x1="1299.90" y1="450.20" x2="1428.90" y2="450.20" stroke="#858585" stroke-width="1.5" />
<line x1="1293.90" y1="450.20" x2="1299.90" y2="450.20" stroke="#d0d0d0" stroke-width="1.3" />
<text x="1294.30" y="455.80" font-size="14" fill="#dcdcdc" text-anchor="end" >98</text>
<line x1="1299.90" y1="385.20" x2="1428.90" y2="385.20" stroke="#858585" stroke-width="1.5" />
<line x1="1293.90" y1="385.20" x2="1299.90" y2="385.20" stroke="#d0d0d0" stroke-width="1.3" />
<text x="1294.30" y="390.80" font-size="14" fill="#dcdcdc" text-anchor="end" >100</text>
<line x1="1299.90" y1="319.00" x2="1428.90" y2="319.00" stroke="#858585" stroke-width="1.5" />
<line x1="1293.90" y1="319.00" x2="1299.90" y2="319.00" stroke="#d0d0d0" stroke-width="1.3" />
<text x="1294.30" y="324.60" font-size="14" fill="#dcdcdc" text-anchor="end" >102</text>
<line x1="1299.90" y1="253.60" x2="1428.90" y2="253.60" stroke="#858585" stroke-width="1.5" />
<line x1="1293.90" y1="253.60" x2="1299.90" y2="253.60" stroke="#d0d0d0" stroke-width="1.3" />
<text x="1294.30" y="259.20" font-size="14" fill="#dcdcdc" text-anchor="end" >104</text>
<path d="M1299.9 546.8 V218.5 H1428.9 V546.8" fill="none" stroke="#8c8c8c" stroke-width="1.6"/>
<line x1="1298.90" y1="548.00" x2="1429.90" y2="548.00" stroke="#9a9a9a" stroke-width="1.6" />
<line x1="1299.90" y1="546.80" x2="1299.90" y2="553.80" stroke="#d0d0d0" stroke-width="1.4" />
<line x1="1428.90" y1="546.80" x2="1428.90" y2="553.80" stroke="#d0d0d0" stroke-width="1.4" />
<text x="1348.70" y="213.30" font-size="13" fill="#dcdcdc" text-anchor="middle" textLength="84.0" lengthAdjust="spacingAndGlyphs" >RGB Balance</text>
<rect x="1311.90" y="418.50" width="33.40" height="128.30" fill="url(#gBr)" stroke="#000" stroke-width="1.6"/>
<rect x="1345.30" y="375.30" width="34.10" height="171.50" fill="url(#gBg)" stroke="#000" stroke-width="1.6"/>
<rect x="1379.40" y="375.30" width="34.50" height="171.50" fill="url(#gBb)" stroke="#000" stroke-width="1.6"/>
<text x="1363.70" y="565.00" font-size="14" fill="#dcdcdc" text-anchor="middle" >100</text>
<text x="1251.00" y="606.00" font-size="29" fill="#f2f2f2" text-anchor="middle" textLength="279.0" lengthAdjust="spacingAndGlyphs" >Contrast Ratio: 2433</text>
<rect x="1488.80" y="220.10" width="402.70" height="322.00" fill="#222222" />
<line x1="1488.80" y1="479.20" x2="1891.50" y2="479.20" stroke="#858585" stroke-width="1.3" />
<line x1="1488.80" y1="413.50" x2="1891.50" y2="413.50" stroke="#858585" stroke-width="1.3" />
<line x1="1488.80" y1="349.00" x2="1891.50" y2="349.00" stroke="#858585" stroke-width="1.3" />
<line x1="1488.80" y1="285.90" x2="1891.50" y2="285.90" stroke="#858585" stroke-width="1.3" />
<line x1="1488.80" y1="220.10" x2="1891.50" y2="220.10" stroke="#858585" stroke-width="1.3" />
<line x1="1481.80" y1="542.10" x2="1488.80" y2="542.10" stroke="#d0d0d0" stroke-width="1.3" />
<text x="1482.60" y="547.50" font-size="14" fill="#dcdcdc" text-anchor="end" >1.8</text>
<line x1="1481.80" y1="479.20" x2="1488.80" y2="479.20" stroke="#d0d0d0" stroke-width="1.3" />
<text x="1482.60" y="484.60" font-size="14" fill="#dcdcdc" text-anchor="end" >2</text>
<line x1="1481.80" y1="413.50" x2="1488.80" y2="413.50" stroke="#d0d0d0" stroke-width="1.3" />
<text x="1482.60" y="418.90" font-size="14" fill="#dcdcdc" text-anchor="end" >2.2</text>
<line x1="1481.80" y1="349.00" x2="1488.80" y2="349.00" stroke="#d0d0d0" stroke-width="1.3" />
<text x="1482.60" y="354.40" font-size="14" fill="#dcdcdc" text-anchor="end" >2.4</text>
<line x1="1481.80" y1="285.90" x2="1488.80" y2="285.90" stroke="#d0d0d0" stroke-width="1.3" />
<text x="1482.60" y="291.30" font-size="14" fill="#dcdcdc" text-anchor="end" >2.6</text>
<line x1="1481.80" y1="220.10" x2="1488.80" y2="220.10" stroke="#d0d0d0" stroke-width="1.3" />
<text x="1482.60" y="225.50" font-size="14" fill="#dcdcdc" text-anchor="end" >2.8</text>
<rect x="1488.80" y="220.10" width="402.70" height="322.00" fill="none" stroke="#8c8c8c" stroke-width="2"/>
<line x1="1488.80" y1="220.10" x2="1891.50" y2="220.10" stroke="#a0a0a0" stroke-width="3" />
<text x="1676.90" y="213.30" font-size="13" fill="#dcdcdc" text-anchor="middle" textLength="106.0" lengthAdjust="spacingAndGlyphs" >Gamma Log/Log</text>
<line x1="1488.80" y1="542.10" x2="1488.80" y2="548.10" stroke="#d0d0d0" stroke-width="1.3" />
<text x="1488.80" y="565.10" font-size="14" fill="#dcdcdc" text-anchor="middle" >0</text>
<line x1="1569.34" y1="542.10" x2="1569.34" y2="548.10" stroke="#d0d0d0" stroke-width="1.3" />
<text x="1569.34" y="565.10" font-size="14" fill="#dcdcdc" text-anchor="middle" >20</text>
<line x1="1649.88" y1="542.10" x2="1649.88" y2="548.10" stroke="#d0d0d0" stroke-width="1.3" />
<text x="1649.88" y="565.10" font-size="14" fill="#dcdcdc" text-anchor="middle" >40</text>
<line x1="1730.42" y1="542.10" x2="1730.42" y2="548.10" stroke="#d0d0d0" stroke-width="1.3" />
<text x="1730.42" y="565.10" font-size="14" fill="#dcdcdc" text-anchor="middle" >60</text>
<line x1="1810.96" y1="542.10" x2="1810.96" y2="548.10" stroke="#d0d0d0" stroke-width="1.3" />
<text x="1810.96" y="565.10" font-size="14" fill="#dcdcdc" text-anchor="middle" >80</text>
<line x1="1891.50" y1="542.10" x2="1891.50" y2="548.10" stroke="#d0d0d0" stroke-width="1.3" />
<text x="1891.50" y="565.10" font-size="14" fill="#dcdcdc" text-anchor="middle" >100</text>
<clipPath id="cGam"><rect x="1488.8" y="220.1" width="402.70000000000005" height="322.0"/></clipPath>
<polyline points="1488.80,704.33 1529.07,476.71 1569.34,434.63 1609.61,414.33 1649.88,411.93 1690.15,401.66 1730.42,401.08 1770.69,403.18 1810.96,390.38 1851.23,376.09 1891.50,387.34" fill="none" stroke="#8c8c8c" stroke-width="2.9" stroke-linejoin="round" clip-path="url(#cGam)"/>
<polyline points="1503.30,550.78 1504.46,543.82 1505.63,537.52 1506.80,531.79 1507.96,526.55 1509.13,521.72 1510.30,517.27 1511.46,513.13 1512.63,509.29 1513.80,505.70 1514.96,502.35 1516.13,499.19 1517.29,496.23 1518.46,493.43 1519.63,490.79 1520.79,488.28 1521.96,485.91 1523.13,483.65 1524.29,481.50 1525.46,479.45 1526.63,477.45 1527.79,475.50 1528.96,473.63 1530.13,471.83 1531.29,470.11 1532.46,468.46 1533.62,466.87 1534.79,465.34 1535.96,463.87 1537.12,462.45 1539.14,460.11 1545.11,453.93 1551.08,448.65 1557.05,444.07 1563.03,440.06 1569.00,436.50 1574.97,433.32 1580.94,430.46 1586.92,427.87 1592.89,425.50 1598.86,423.33 1604.83,421.33 1610.80,419.49 1616.78,417.77 1622.75,416.17 1628.72,414.68 1634.69,413.28 1640.67,411.98 1646.64,410.77 1652.61,409.62 1658.58,408.54 1664.55,407.51 1670.53,406.53 1676.50,405.61 1682.47,404.72 1688.44,403.88 1694.42,403.08 1700.39,402.31 1706.36,401.57 1712.33,400.86 1718.30,400.18 1724.28,399.53 1730.25,398.90 1736.22,398.30 1742.19,397.72 1748.17,397.16 1754.14,396.61 1760.11,396.09 1766.08,395.59 1772.06,395.10 1778.03,394.62 1784.00,394.16 1789.97,393.72 1795.94,393.29 1801.92,392.87 1807.89,392.46 1813.86,392.07 1819.83,391.68 1825.81,391.31 1831.78,390.95 1837.75,390.59 1843.72,390.25 1849.69,389.91 1855.67,389.58 1861.64,389.26 1867.61,388.95 1873.58,388.65 1879.56,388.35 1885.53,388.06 1891.50,387.78" fill="none" stroke="#ffff00" stroke-width="2.8" stroke-linejoin="round" clip-path="url(#cGam)"/>
<text x="1677.00" y="606.10" font-size="29" fill="#f2f2f2" text-anchor="middle" textLength="320.0" lengthAdjust="spacingAndGlyphs" >Average Gamma: 2.198</text>
<rect x="226.25" y="626.40" width="1689.75" height="132.80" fill="#000000" />
<rect x="226.25" y="626.40" width="85.00" height="132.80" fill="#020202" />
<text transform="translate(337 672.5) rotate(-90)" font-size="12.5" fill="#e8e8e8" textLength="34.5" lengthAdjust="spacingAndGlyphs">Actual</text>
<text transform="translate(337 730.3) rotate(-90)" font-size="12.5" fill="#e8e8e8" textLength="34.3" lengthAdjust="spacingAndGlyphs">Target</text>
<rect x="346.25" y="632.70" width="121.60" height="103.20" fill="rgb(0,0,0)" stroke="#e4e4e4" stroke-width="1.6"/>
<text x="407.05" y="750.60" font-size="12.5" fill="#f0f0f0" text-anchor="middle" >0</text>
<rect x="488.75" y="632.70" width="121.60" height="103.20" fill="rgb(26,26,26)" stroke="#e4e4e4" stroke-width="1.6"/>
<text x="549.55" y="750.60" font-size="12.5" fill="#f0f0f0" text-anchor="middle" >10</text>
<rect x="631.25" y="632.70" width="121.60" height="103.20" fill="rgb(51,51,51)" stroke="#e4e4e4" stroke-width="1.6"/>
<text x="692.05" y="750.60" font-size="12.5" fill="#f0f0f0" text-anchor="middle" >20</text>
<rect x="773.75" y="632.70" width="121.60" height="103.20" fill="rgb(76,76,76)" stroke="#e4e4e4" stroke-width="1.6"/>
<text x="834.55" y="750.60" font-size="12.5" fill="#f0f0f0" text-anchor="middle" >30</text>
<rect x="916.25" y="632.70" width="121.60" height="103.20" fill="rgb(102,102,102)" stroke="#e4e4e4" stroke-width="1.6"/>
<text x="977.05" y="750.60" font-size="12.5" fill="#f0f0f0" text-anchor="middle" >40</text>
<rect x="1058.75" y="632.70" width="121.60" height="103.20" fill="rgb(128,128,128)" stroke="#e4e4e4" stroke-width="1.6"/>
<text x="1119.55" y="750.60" font-size="12.5" fill="#f0f0f0" text-anchor="middle" >50</text>
<rect x="1201.25" y="632.70" width="121.60" height="103.20" fill="rgb(153,153,153)" stroke="#e4e4e4" stroke-width="1.6"/>
<text x="1262.05" y="750.60" font-size="12.5" fill="#f0f0f0" text-anchor="middle" >60</text>
<rect x="1343.75" y="632.70" width="121.60" height="103.20" fill="rgb(178,178,178)" stroke="#e4e4e4" stroke-width="1.6"/>
<text x="1404.55" y="750.60" font-size="12.5" fill="#f0f0f0" text-anchor="middle" >70</text>
<rect x="1486.25" y="632.70" width="121.60" height="103.20" fill="rgb(204,204,204)" stroke="#e4e4e4" stroke-width="1.6"/>
<text x="1547.05" y="750.60" font-size="12.5" fill="#f0f0f0" text-anchor="middle" >80</text>
<rect x="1628.75" y="632.70" width="121.60" height="103.20" fill="rgb(230,230,230)" />
<text x="1689.55" y="750.60" font-size="12.5" fill="#f0f0f0" text-anchor="middle" >90</text>
<rect x="1771.25" y="632.70" width="121.60" height="103.20" fill="rgb(255,255,255)" />
<text x="1832.05" y="750.60" font-size="12.5" fill="#f0f0f0" text-anchor="middle" >100</text>
<text x="247.30" y="827.20" font-size="30" fill="#f0f0f0" textLength="221.7" lengthAdjust="spacingAndGlyphs" >Current Reading</text>
<text x="247.30" y="870.60" font-size="25" fill="#f0f0f0" textLength="103.9" lengthAdjust="spacingAndGlyphs" >x: 0.3104</text>
<text x="399.20" y="870.60" font-size="25" fill="#f0f0f0" textLength="89.9" lengthAdjust="spacingAndGlyphs" >y: 0.329</text>
<text x="247.30" y="904.90" font-size="25" fill="#f0f0f0" textLength="112.6" lengthAdjust="spacingAndGlyphs" >u': 0.1962</text>
<text x="399.20" y="904.90" font-size="25" fill="#f0f0f0" textLength="96.5" lengthAdjust="spacingAndGlyphs" >v': 0.468</text>
<text x="247.30" y="939.20" font-size="25" fill="#f0f0f0" textLength="175.5" lengthAdjust="spacingAndGlyphs" >cd/m²: 452.893</text>
<text x="247.30" y="973.30" font-size="25" fill="#f0f0f0" textLength="155.9" lengthAdjust="spacingAndGlyphs" >ΔE 2000: 1.82</text>
<rect x="595.80" y="797.80" width="255.50" height="4.60" fill="url(#cs0)" />
<rect x="595.80" y="801.80" width="255.50" height="4.60" fill="url(#cs1)" />
<rect x="595.80" y="805.80" width="255.50" height="4.60" fill="url(#cs2)" />
<rect x="595.80" y="809.79" width="255.50" height="4.60" fill="url(#cs3)" />
<rect x="595.80" y="813.79" width="255.50" height="4.60" fill="url(#cs4)" />
<rect x="595.80" y="817.79" width="255.50" height="4.60" fill="url(#cs5)" />
<rect x="595.80" y="821.79" width="255.50" height="4.60" fill="url(#cs6)" />
<rect x="595.80" y="825.78" width="255.50" height="4.60" fill="url(#cs7)" />
<rect x="595.80" y="829.78" width="255.50" height="4.60" fill="url(#cs8)" />
<rect x="595.80" y="833.78" width="255.50" height="4.60" fill="url(#cs9)" />
<rect x="595.80" y="837.78" width="255.50" height="4.60" fill="url(#cs10)" />
<rect x="595.80" y="841.77" width="255.50" height="4.60" fill="url(#cs11)" />
<rect x="595.80" y="845.77" width="255.50" height="4.60" fill="url(#cs12)" />
<rect x="595.80" y="849.77" width="255.50" height="4.60" fill="url(#cs13)" />
<rect x="595.80" y="853.77" width="255.50" height="4.60" fill="url(#cs14)" />
<rect x="595.80" y="857.76" width="255.50" height="4.60" fill="url(#cs15)" />
<rect x="595.80" y="861.76" width="255.50" height="4.60" fill="url(#cs16)" />
<rect x="595.80" y="865.76" width="255.50" height="4.60" fill="url(#cs17)" />
<rect x="595.80" y="869.76" width="255.50" height="4.60" fill="url(#cs18)" />
<rect x="595.80" y="873.75" width="255.50" height="4.60" fill="url(#cs19)" />
<rect x="595.80" y="877.75" width="255.50" height="4.60" fill="url(#cs20)" />
<rect x="595.80" y="881.75" width="255.50" height="4.60" fill="url(#cs21)" />
<rect x="595.80" y="885.75" width="255.50" height="4.60" fill="url(#cs22)" />
<rect x="595.80" y="889.75" width="255.50" height="4.60" fill="url(#cs23)" />
<rect x="595.80" y="893.74" width="255.50" height="4.60" fill="url(#cs24)" />
<rect x="595.80" y="897.74" width="255.50" height="4.60" fill="url(#cs25)" />
<rect x="595.80" y="901.74" width="255.50" height="4.60" fill="url(#cs26)" />
<rect x="595.80" y="905.74" width="255.50" height="4.60" fill="url(#cs27)" />
<rect x="595.80" y="909.73" width="255.50" height="4.60" fill="url(#cs28)" />
<rect x="595.80" y="913.73" width="255.50" height="4.60" fill="url(#cs29)" />
<rect x="595.80" y="917.73" width="255.50" height="4.60" fill="url(#cs30)" />
<rect x="595.80" y="921.73" width="255.50" height="4.60" fill="url(#cs31)" />
<rect x="595.80" y="925.72" width="255.50" height="4.60" fill="url(#cs32)" />
<rect x="595.80" y="929.72" width="255.50" height="4.60" fill="url(#cs33)" />
<rect x="595.80" y="933.72" width="255.50" height="4.60" fill="url(#cs34)" />
<rect x="595.80" y="937.72" width="255.50" height="4.60" fill="url(#cs35)" />
<rect x="595.80" y="941.71" width="255.50" height="4.60" fill="url(#cs36)" />
<rect x="595.80" y="945.71" width="255.50" height="4.60" fill="url(#cs37)" />
<rect x="595.80" y="949.71" width="255.50" height="4.60" fill="url(#cs38)" />
<rect x="595.80" y="953.71" width="255.50" height="4.60" fill="url(#cs39)" />
<rect x="595.80" y="957.70" width="255.50" height="4.60" fill="url(#cs40)" />
<rect x="595.80" y="961.70" width="255.50" height="4.60" fill="url(#cs41)" />
<rect x="595.80" y="797.80" width="255.50" height="167.90" fill="none" stroke="#9a9a9a" stroke-width="1.6"/>
<clipPath id="cCie"><rect x="595.8" y="797.8" width="255.5" height="167.9000000000001"/></clipPath>
<polyline points="620.00,972.32 630.13,964.85 640.26,957.48 650.39,950.20 660.52,943.03 670.65,935.95 680.78,928.97 690.91,922.09 701.04,915.31 711.17,908.62 721.30,902.03 731.43,895.54 741.57,889.15 751.70,882.86 761.83,876.66 771.96,870.57 782.09,864.57 792.22,858.67 802.35,852.86 812.48,847.16 822.61,841.55 832.74,836.04 842.87,830.63 853.00,825.32" fill="none" stroke="#000" stroke-width="2.8" stroke-linejoin="round" clip-path="url(#cCie)"/>
<text x="705.80" y="792.00" font-size="13" fill="#dcdcdc" text-anchor="middle" textLength="76.0" lengthAdjust="spacingAndGlyphs" >CIE 1931 xy</text>
<line x1="589.50" y1="846.50" x2="595.80" y2="846.50" stroke="#8c8c8c" stroke-width="1.4" />
<text x="589.00" y="851.50" font-size="14" fill="#dcdcdc" text-anchor="end" >0.34</text>
<line x1="589.50" y1="913.80" x2="595.80" y2="913.80" stroke="#8c8c8c" stroke-width="1.4" />
<text x="589.00" y="918.80" font-size="14" fill="#dcdcdc" text-anchor="end" >0.32</text>
<line x1="607.30" y1="965.70" x2="607.30" y2="971.70" stroke="#8c8c8c" stroke-width="1.4" />
<text x="607.30" y="988.30" font-size="14" fill="#dcdcdc" text-anchor="middle" >0.29</text>
<line x1="658.45" y1="965.70" x2="658.45" y2="971.70" stroke="#8c8c8c" stroke-width="1.4" />
<text x="658.45" y="988.30" font-size="14" fill="#dcdcdc" text-anchor="middle" >0.3</text>
<line x1="709.60" y1="965.70" x2="709.60" y2="971.70" stroke="#8c8c8c" stroke-width="1.4" />
<text x="709.60" y="988.30" font-size="14" fill="#dcdcdc" text-anchor="middle" >0.31</text>
<line x1="760.75" y1="965.70" x2="760.75" y2="971.70" stroke="#8c8c8c" stroke-width="1.4" />
<text x="760.75" y="988.30" font-size="14" fill="#dcdcdc" text-anchor="middle" >0.32</text>
<line x1="811.90" y1="965.70" x2="811.90" y2="971.70" stroke="#8c8c8c" stroke-width="1.4" />
<text x="811.90" y="988.30" font-size="14" fill="#dcdcdc" text-anchor="middle" >0.33</text>
<rect x="716.41" y="874.21" width="14" height="14" fill="none" stroke="#000" stroke-width="1.6"/>
<circle cx="697.84" cy="897.70" r="4.6" fill="rgb(26,26,26)" stroke="#222" stroke-width="1"/>
<circle cx="708.07" cy="891.31" r="4.6" fill="rgb(51,51,51)" stroke="#222" stroke-width="1"/>
<circle cx="719.83" cy="878.52" r="4.6" fill="rgb(76,76,76)" stroke="#222" stroke-width="1"/>
<circle cx="713.18" cy="873.48" r="4.6" fill="rgb(102,102,102)" stroke="#222" stroke-width="1"/>
<circle cx="714.20" cy="881.89" r="4.6" fill="rgb(128,128,128)" stroke="#222" stroke-width="1"/>
<circle cx="716.25" cy="876.17" r="4.6" fill="rgb(153,153,153)" stroke="#222" stroke-width="1"/>
<circle cx="712.16" cy="875.16" r="4.6" fill="rgb(178,178,178)" stroke="#222" stroke-width="1"/>
<circle cx="710.11" cy="884.24" r="4.6" fill="rgb(204,204,204)" stroke="#222" stroke-width="1"/>
<circle cx="710.62" cy="884.24" r="4.6" fill="rgb(230,230,230)" stroke="#222" stroke-width="1"/>
<circle cx="711.65" cy="881.21" r="4.6" fill="rgb(255,255,255)" stroke="#222" stroke-width="1"/>
<rect x="862.7" y="769.2" width="1049.1" height="232.8" fill="none" stroke="#bdbdbd" stroke-width="1.3" stroke-dasharray="2 2"/>
<rect x="863.50" y="770.00" width="864.20" height="24.00" fill="url(#gHdr)" />
<text x="1023.40" y="787.00" font-size="12.5" fill="#f0f0f0" text-anchor="middle" >0</text>
<text x="1093.80" y="787.00" font-size="12.5" fill="#f0f0f0" text-anchor="middle" >10</text>
<text x="1160.52" y="787.00" font-size="12.5" fill="#f0f0f0" text-anchor="middle" >20</text>
<text x="1227.24" y="787.00" font-size="12.5" fill="#f0f0f0" text-anchor="middle" >30</text>
<text x="1293.96" y="787.00" font-size="12.5" fill="#f0f0f0" text-anchor="middle" >40</text>
<text x="1360.68" y="787.00" font-size="12.5" fill="#f0f0f0" text-anchor="middle" >50</text>
<text x="1427.40" y="787.00" font-size="12.5" fill="#f0f0f0" text-anchor="middle" >60</text>
<text x="1494.12" y="787.00" font-size="12.5" fill="#f0f0f0" text-anchor="middle" >70</text>
<text x="1560.84" y="787.00" font-size="12.5" fill="#f0f0f0" text-anchor="middle" >80</text>
<text x="1627.56" y="787.00" font-size="12.5" fill="#f0f0f0" text-anchor="middle" >90</text>
<text x="1694.28" y="787.00" font-size="12.5" fill="#f0f0f0" text-anchor="middle" >100</text>
<rect x="863.50" y="794.00" width="864.20" height="23.60" fill="#3d3d3d" />
<text x="872.60" y="812.30" font-size="12.5" fill="#f4f4f4" font-weight="bold" >x: CIE31</text>
<text x="990.00" y="812.30" font-size="12.5" fill="#ececec" >0.2474</text>
<text x="1063.60" y="812.30" font-size="12.5" fill="#ececec" >0.3077</text>
<text x="1130.32" y="812.30" font-size="12.5" fill="#ececec" >0.3097</text>
<text x="1197.04" y="812.30" font-size="12.5" fill="#ececec" >0.3120</text>
<text x="1263.76" y="812.30" font-size="12.5" fill="#ececec" >0.3107</text>
<text x="1330.48" y="812.30" font-size="12.5" fill="#ececec" >0.3109</text>
<text x="1397.20" y="812.30" font-size="12.5" fill="#ececec" >0.3113</text>
<text x="1463.92" y="812.30" font-size="12.5" fill="#ececec" >0.3105</text>
<text x="1530.64" y="812.30" font-size="12.5" fill="#ececec" >0.3101</text>
<text x="1597.36" y="812.30" font-size="12.5" fill="#ececec" >0.3102</text>
<text x="1664.08" y="812.30" font-size="12.5" fill="#ececec" >0.3104</text>
<rect x="863.50" y="817.60" width="864.20" height="23.60" fill="#7d7d7d" />
<text x="872.60" y="835.90" font-size="12.5" fill="#f4f4f4" font-weight="bold" >y: CIE31</text>
<text x="990.00" y="835.90" font-size="12.5" fill="#ececec" >0.2780</text>
<text x="1063.60" y="835.90" font-size="12.5" fill="#ececec" >0.3241</text>
<text x="1130.32" y="835.90" font-size="12.5" fill="#ececec" >0.3260</text>
<text x="1197.04" y="835.90" font-size="12.5" fill="#ececec" >0.3298</text>
<text x="1263.76" y="835.90" font-size="12.5" fill="#ececec" >0.3313</text>
<text x="1330.48" y="835.90" font-size="12.5" fill="#ececec" >0.3288</text>
<text x="1397.20" y="835.90" font-size="12.5" fill="#ececec" >0.3305</text>
<text x="1463.92" y="835.90" font-size="12.5" fill="#ececec" >0.3308</text>
<text x="1530.64" y="835.90" font-size="12.5" fill="#ececec" >0.3281</text>
<text x="1597.36" y="835.90" font-size="12.5" fill="#ececec" >0.3281</text>
<text x="1664.08" y="835.90" font-size="12.5" fill="#ececec" >0.3290</text>
<rect x="863.50" y="841.20" width="864.20" height="23.60" fill="#3d3d3d" />
<text x="872.60" y="859.50" font-size="12.5" fill="#f4f4f4" font-weight="bold" >Y</text>
<text x="990.00" y="859.50" font-size="12.5" fill="#ececec" >0.1862</text>
<text x="1063.60" y="859.50" font-size="12.5" fill="#ececec" >4.6921</text>
<text x="1130.32" y="859.50" font-size="12.5" fill="#ececec" >14.7053</text>
<text x="1197.04" y="859.50" font-size="12.5" fill="#ececec" >31.9105</text>
<text x="1263.76" y="859.50" font-size="12.5" fill="#ececec" >60.3986</text>
<text x="1330.48" y="859.50" font-size="12.5" fill="#ececec" >97.3491</text>
<text x="1397.20" y="859.50" font-size="12.5" fill="#ececec" >144.7983</text>
<text x="1463.92" y="859.50" font-size="12.5" fill="#ececec" >203.4739</text>
<text x="1530.64" y="859.50" font-size="12.5" fill="#ececec" >273.1792</text>
<text x="1597.36" y="859.50" font-size="12.5" fill="#ececec" >356.8537</text>
<text x="1664.08" y="859.50" font-size="12.5" fill="#ececec" >452.8930</text>
<rect x="863.50" y="864.80" width="864.20" height="23.60" fill="#7d7d7d" />
<text x="872.60" y="883.10" font-size="12.5" fill="#f4f4f4" font-weight="bold" >Target Y</text>
<text x="990.00" y="883.10" font-size="12.5" fill="#ececec" >0.0000</text>
<text x="1063.60" y="883.10" font-size="12.5" fill="#ececec" >4.6783</text>
<text x="1130.32" y="883.10" font-size="12.5" fill="#ececec" >14.9929</text>
<text x="1197.04" y="883.10" font-size="12.5" fill="#ececec" >32.7314</text>
<text x="1263.76" y="883.10" font-size="12.5" fill="#ececec" >60.1751</text>
<text x="1330.48" y="883.10" font-size="12.5" fill="#ececec" >97.7617</text>
<text x="1397.20" y="883.10" font-size="12.5" fill="#ececec" >144.2676</text>
<text x="1463.92" y="883.10" font-size="12.5" fill="#ececec" >201.6285</text>
<text x="1530.64" y="883.10" font-size="12.5" fill="#ececec" >273.4692</text>
<text x="1597.36" y="883.10" font-size="12.5" fill="#ececec" >358.3733</text>
<text x="1664.08" y="883.10" font-size="12.5" fill="#ececec" >452.8930</text>
<rect x="863.50" y="888.40" width="864.20" height="23.60" fill="#3d3d3d" />
<text x="872.60" y="906.70" font-size="12.5" fill="#f4f4f4" font-weight="bold" >Gamma Log/Log</text>
<text x="990.00" y="906.70" font-size="12.5" fill="#ececec" >1.2778</text>
<text x="1063.60" y="906.70" font-size="12.5" fill="#ececec" >2.0015</text>
<text x="1130.32" y="906.70" font-size="12.5" fill="#ececec" >2.1296</text>
<text x="1197.04" y="906.70" font-size="12.5" fill="#ececec" >2.1914</text>
<text x="1263.76" y="906.70" font-size="12.5" fill="#ececec" >2.1987</text>
<text x="1330.48" y="906.70" font-size="12.5" fill="#ececec" >2.2305</text>
<text x="1397.20" y="906.70" font-size="12.5" fill="#ececec" >2.2323</text>
<text x="1463.92" y="906.70" font-size="12.5" fill="#ececec" >2.2258</text>
<text x="1530.64" y="906.70" font-size="12.5" fill="#ececec" >2.2655</text>
<text x="1597.36" y="906.70" font-size="12.5" fill="#ececec" >2.3098</text>
<text x="1664.08" y="906.70" font-size="12.5" fill="#ececec" >2.2749</text>
<rect x="863.50" y="912.00" width="864.20" height="23.60" fill="#7d7d7d" />
<text x="872.60" y="930.30" font-size="12.5" fill="#f4f4f4" font-weight="bold" >CCT</text>
<text x="990.00" y="930.30" font-size="12.5" fill="#ececec" >15155.0000</text>
<text x="1063.60" y="930.30" font-size="12.5" fill="#ececec" >6832.0000</text>
<text x="1130.32" y="930.30" font-size="12.5" fill="#ececec" >6696.0000</text>
<text x="1197.04" y="930.30" font-size="12.5" fill="#ececec" >6535.0000</text>
<text x="1263.76" y="930.30" font-size="12.5" fill="#ececec" >6598.0000</text>
<text x="1330.48" y="930.30" font-size="12.5" fill="#ececec" >6606.0000</text>
<text x="1397.20" y="930.30" font-size="12.5" fill="#ececec" >6571.0000</text>
<text x="1463.92" y="930.30" font-size="12.5" fill="#ececec" >6609.0000</text>
<text x="1530.64" y="930.30" font-size="12.5" fill="#ececec" >6657.0000</text>
<text x="1597.36" y="930.30" font-size="12.5" fill="#ececec" >6651.0000</text>
<text x="1664.08" y="930.30" font-size="12.5" fill="#ececec" >6629.0000</text>
<rect x="863.50" y="935.60" width="864.20" height="23.60" fill="#3d3d3d" />
<text x="872.60" y="953.90" font-size="12.5" fill="#f4f4f4" font-weight="bold" >ΔE 2000</text>
<text x="990.00" y="953.90" font-size="12.5" fill="#ececec" >0.4450</text>
<text x="1063.60" y="953.90" font-size="12.5" fill="#ececec" >0.6154</text>
<text x="1130.32" y="953.90" font-size="12.5" fill="#ececec" >0.5684</text>
<text x="1197.04" y="953.90" font-size="12.5" fill="#ececec" >0.5768</text>
<text x="1263.76" y="953.90" font-size="12.5" fill="#ececec" >1.6779</text>
<text x="1330.48" y="953.90" font-size="12.5" fill="#ececec" >0.8216</text>
<text x="1397.20" y="953.90" font-size="12.5" fill="#ececec" >1.5125</text>
<text x="1463.92" y="953.90" font-size="12.5" fill="#ececec" >2.2495</text>
<text x="1530.64" y="953.90" font-size="12.5" fill="#ececec" >1.3840</text>
<text x="1597.36" y="953.90" font-size="12.5" fill="#ececec" >1.4019</text>
<text x="1664.08" y="953.90" font-size="12.5" fill="#ececec" >1.8167</text>
<rect x="863.50" y="959.20" width="864.20" height="23.60" fill="#7d7d7d" />
<text x="872.60" y="977.50" font-size="12.5" fill="#f4f4f4" font-weight="bold" >ΔE ITP</text>
<text x="990.00" y="977.50" font-size="12.5" fill="#ececec" >59.5180</text>
<text x="1063.60" y="977.50" font-size="12.5" fill="#ececec" >2.0047</text>
<text x="1130.32" y="977.50" font-size="12.5" fill="#ececec" >1.8136</text>
<text x="1197.04" y="977.50" font-size="12.5" fill="#ececec" >1.8121</text>
<text x="1263.76" y="977.50" font-size="12.5" fill="#ececec" >1.9937</text>
<text x="1330.48" y="977.50" font-size="12.5" fill="#ececec" >1.2009</text>
<text x="1397.20" y="977.50" font-size="12.5" fill="#ececec" >1.4495</text>
<text x="1463.92" y="977.50" font-size="12.5" fill="#ececec" >2.1172</text>
<text x="1530.64" y="977.50" font-size="12.5" fill="#ececec" >1.6609</text>
<text x="1597.36" y="977.50" font-size="12.5" fill="#ececec" >1.6169</text>
<text x="1664.08" y="977.50" font-size="12.5" fill="#ececec" >1.6107</text>
<rect x="226.20" y="1076.2" width="118.5" height="72" rx="4" fill="url(#gBtn)"/>
<rect x="231.80" y="1081.8" width="107.3" height="40.4" rx="3" fill="rgb(0,0,0)"/>
<rect x="232.40" y="1082.4" width="106.1" height="39.2" rx="3" fill="none" stroke="rgba(0,0,0,0.28)" stroke-width="1.2"/>
<path d="M233.70 1083.2 H337.20" stroke="rgba(0,0,0,0.35)" stroke-width="1.6"/>
<text x="285.45" y="1140.50" font-size="12" fill="#333" text-anchor="middle" font-weight="bold" >0</text>
<rect x="347.10" y="1076.2" width="118.5" height="72" rx="4" fill="url(#gBtn)"/>
<rect x="352.70" y="1081.8" width="107.3" height="40.4" rx="3" fill="rgb(26,26,26)"/>
<rect x="353.30" y="1082.4" width="106.1" height="39.2" rx="3" fill="none" stroke="rgba(0,0,0,0.28)" stroke-width="1.2"/>
<path d="M354.60 1083.2 H458.10" stroke="rgba(0,0,0,0.35)" stroke-width="1.6"/>
<text x="406.35" y="1140.50" font-size="12" fill="#333" text-anchor="middle" font-weight="bold" >10</text>
<rect x="468.00" y="1076.2" width="118.5" height="72" rx="4" fill="url(#gBtn)"/>
<rect x="473.60" y="1081.8" width="107.3" height="40.4" rx="3" fill="rgb(51,51,51)"/>
<rect x="474.20" y="1082.4" width="106.1" height="39.2" rx="3" fill="none" stroke="rgba(0,0,0,0.28)" stroke-width="1.2"/>
<path d="M475.50 1083.2 H579.00" stroke="rgba(0,0,0,0.35)" stroke-width="1.6"/>
<text x="527.25" y="1140.50" font-size="12" fill="#333" text-anchor="middle" font-weight="bold" >20</text>
<rect x="588.90" y="1076.2" width="118.5" height="72" rx="4" fill="url(#gBtn)"/>
<rect x="594.50" y="1081.8" width="107.3" height="40.4" rx="3" fill="rgb(76,76,76)"/>
<rect x="595.10" y="1082.4" width="106.1" height="39.2" rx="3" fill="none" stroke="rgba(0,0,0,0.28)" stroke-width="1.2"/>
<path d="M596.40 1083.2 H699.90" stroke="rgba(0,0,0,0.35)" stroke-width="1.6"/>
<text x="648.15" y="1140.50" font-size="12" fill="#333" text-anchor="middle" font-weight="bold" >30</text>
<rect x="709.80" y="1076.2" width="118.5" height="72" rx="4" fill="url(#gBtn)"/>
<rect x="715.40" y="1081.8" width="107.3" height="40.4" rx="3" fill="rgb(102,102,102)"/>
<rect x="716.00" y="1082.4" width="106.1" height="39.2" rx="3" fill="none" stroke="rgba(0,0,0,0.28)" stroke-width="1.2"/>
<path d="M717.30 1083.2 H820.80" stroke="rgba(0,0,0,0.35)" stroke-width="1.6"/>
<text x="769.05" y="1140.50" font-size="12" fill="#333" text-anchor="middle" font-weight="bold" >40</text>
<rect x="830.70" y="1076.2" width="118.5" height="72" rx="4" fill="url(#gBtn)"/>
<rect x="836.30" y="1081.8" width="107.3" height="40.4" rx="3" fill="rgb(128,128,128)"/>
<rect x="836.90" y="1082.4" width="106.1" height="39.2" rx="3" fill="none" stroke="rgba(0,0,0,0.28)" stroke-width="1.2"/>
<path d="M838.20 1083.2 H941.70" stroke="rgba(0,0,0,0.35)" stroke-width="1.6"/>
<text x="889.95" y="1140.50" font-size="12" fill="#333" text-anchor="middle" font-weight="bold" >50</text>
<rect x="951.60" y="1076.2" width="118.5" height="72" rx="4" fill="url(#gBtn)"/>
<rect x="957.20" y="1081.8" width="107.3" height="40.4" rx="3" fill="rgb(153,153,153)"/>
<rect x="957.80" y="1082.4" width="106.1" height="39.2" rx="3" fill="none" stroke="rgba(0,0,0,0.28)" stroke-width="1.2"/>
<path d="M959.10 1083.2 H1062.60" stroke="rgba(0,0,0,0.35)" stroke-width="1.6"/>
<text x="1010.85" y="1140.50" font-size="12" fill="#333" text-anchor="middle" font-weight="bold" >60</text>
<rect x="1072.50" y="1076.2" width="118.5" height="72" rx="4" fill="url(#gBtn)"/>
<rect x="1078.10" y="1081.8" width="107.3" height="40.4" rx="3" fill="rgb(178,178,178)"/>
<rect x="1078.70" y="1082.4" width="106.1" height="39.2" rx="3" fill="none" stroke="rgba(0,0,0,0.28)" stroke-width="1.2"/>
<path d="M1080.00 1083.2 H1183.50" stroke="rgba(0,0,0,0.35)" stroke-width="1.6"/>
<text x="1131.75" y="1140.50" font-size="12" fill="#333" text-anchor="middle" font-weight="bold" >70</text>
<rect x="1193.40" y="1076.2" width="118.5" height="72" rx="4" fill="url(#gBtn)"/>
<rect x="1199.00" y="1081.8" width="107.3" height="40.4" rx="3" fill="rgb(204,204,204)"/>
<rect x="1199.60" y="1082.4" width="106.1" height="39.2" rx="3" fill="none" stroke="rgba(0,0,0,0.28)" stroke-width="1.2"/>
<path d="M1200.90 1083.2 H1304.40" stroke="rgba(0,0,0,0.35)" stroke-width="1.6"/>
<text x="1252.65" y="1140.50" font-size="12" fill="#333" text-anchor="middle" font-weight="bold" >80</text>
<rect x="1314.30" y="1076.2" width="118.5" height="72" rx="4" fill="url(#gBtn)"/>
<rect x="1319.90" y="1081.8" width="107.3" height="40.4" rx="3" fill="rgb(230,230,230)"/>
<rect x="1320.50" y="1082.4" width="106.1" height="39.2" rx="3" fill="none" stroke="rgba(0,0,0,0.28)" stroke-width="1.2"/>
<path d="M1321.80 1083.2 H1425.30" stroke="rgba(0,0,0,0.35)" stroke-width="1.6"/>
<text x="1373.55" y="1140.50" font-size="12" fill="#333" text-anchor="middle" font-weight="bold" >90</text>
<rect x="1435.20" y="1076.2" width="118.5" height="72" rx="4" fill="#242424"/>
<rect x="1440.80" y="1081.8" width="107.3" height="40.4" rx="3" fill="#fff"/>
<text x="1494.45" y="1140.50" font-size="12.5" fill="#f4f4f4" text-anchor="middle" font-weight="bold" >100</text>
<rect x="1557" y="1076" width="53.6" height="72" rx="4" fill="url(#gBtn)"/>
<line x1="1557.00" y1="1097.00" x2="1610.60" y2="1097.00" stroke="#555555" stroke-width="1.3" />
<circle cx="1583.8" cy="1086.5" r="8.2" fill="url(#gNavK)"/>
<path d="M1578.5 1089.5 H1589 L1583.8 1084 Z" fill="#2a2a2a"/>
<rect x="1567.5" y="1104.5" width="33" height="33" rx="5" fill="#999" stroke="#222" stroke-width="2.4"/>
<rect x="1576.20" y="1113.50" width="15.60" height="15.60" fill="#000" />
<rect x="1576.20" y="1113.50" width="15.60" height="7.50" fill="#1c1c1c" />
<rect x="1612" y="1076" width="305" height="34" rx="4" fill="url(#gBtn)"/>
<rect x="1612" y="1111" width="305" height="35" rx="4" fill="url(#gBtn)"/>
<line x1="1663.75" y1="1076.00" x2="1663.75" y2="1110.00" stroke="#555" stroke-width="1.2" />
<line x1="1714.00" y1="1076.00" x2="1714.00" y2="1110.00" stroke="#555" stroke-width="1.2" />
<line x1="1765.00" y1="1076.00" x2="1765.00" y2="1110.00" stroke="#555" stroke-width="1.2" />
<line x1="1816.70" y1="1076.00" x2="1816.70" y2="1110.00" stroke="#555" stroke-width="1.2" />
<line x1="1866.70" y1="1076.00" x2="1866.70" y2="1110.00" stroke="#555" stroke-width="1.2" />
<line x1="1765.50" y1="1111.00" x2="1765.50" y2="1146.00" stroke="#555" stroke-width="1.2" />
<circle cx="1638" cy="1091" r="10.5" fill="url(#gNavK)"/>
<circle cx="1689.5" cy="1091" r="10.5" fill="url(#gNavK)"/>
<circle cx="1740.5" cy="1091" r="10.5" fill="url(#gNavK)"/>
<circle cx="1791" cy="1091" r="10.5" fill="url(#gNavK)"/>
<circle cx="1841.5" cy="1091" r="10.5" fill="url(#gNavK)"/>
<circle cx="1892" cy="1091" r="10.5" fill="url(#gNavK)"/>
<rect x="1633" y="1086" width="9" height="9" fill="#1e1e1e"/>
<path d="M1685.5 1085.5 L1694 1091 L1685.5 1096.5 Z" fill="#1e1e1e"/>
<path d="M1736 1085 H1734 V1097 H1736 M1745 1085 H1747 V1097 H1745" fill="none" stroke="#222" stroke-width="1.4"/>
<path d="M1791 1091 C1787.5 1087 1784 1087 1784 1091 C1784 1095 1787.5 1095 1791 1091 C1794.5 1087 1798 1087 1798 1091 C1798 1095 1794.5 1095 1791 1091" fill="none" stroke="#222" stroke-width="1.4"/>
<path d="M1845.5 1086.5 A6 6 0 1 0 1847.5 1093" fill="none" stroke="#222" stroke-width="1.6"/>
<circle cx="1638" cy="1127" r="10" fill="url(#gNavK)"/>
<text x="1676.70" y="1137.50" font-size="25" fill="#2e2e2e" font-weight="bold" textLength="56.3" lengthAdjust="spacingAndGlyphs" >Back</text>
<text x="1796.70" y="1137.50" font-size="25" fill="#2e2e2e" font-weight="bold" textLength="58.3" lengthAdjust="spacingAndGlyphs" >Next</text>
<circle cx="1886" cy="1127" r="11" fill="url(#gNavK)"/>
<text x="1886.00" y="1133.00" font-size="18" fill="#333" text-anchor="middle" font-weight="bold" >»</text>
<g opacity="0.72"><path d="M1630.4 1084.6 L1670 1091.7 L1670.4 1115 L1640.8 1117.5 L1697.5 1120 L1656.7 1131.7 L1634 1123 Z" fill="none" stroke="#ffffff" stroke-width="5.4" stroke-linejoin="round" stroke-opacity="0.75"/><path d="M1630.4 1084.6 L1670 1091.7 L1670.4 1115 L1640.8 1117.5 L1697.5 1120 L1656.7 1131.7 L1634 1123 Z" fill="none" stroke="#a8303c" stroke-width="3.2" stroke-linejoin="round"/><path d="M1642.5 1096.7 L1653.3 1111.7 L1674 1083.8" fill="none" stroke="#fff" stroke-width="5.4" stroke-linejoin="round"/><path d="M1642.5 1096.7 L1653.3 1111.7 L1674 1083.8" fill="none" stroke="#3a3a3a" stroke-width="3.6" stroke-linejoin="round"/></g>
<text x="1674" y="1112.5" font-size="27" font-weight="bold" fill="#a8303c" fill-opacity="0.72" stroke="#fff" stroke-opacity="0.6" stroke-width="2.2" paint-order="stroke" textLength="145" lengthAdjust="spacingAndGlyphs">NOTEBOOK</text>
<text x="1819" y="1112.5" font-size="27" fill="#262626" fill-opacity="0.85" stroke="#fff" stroke-opacity="0.6" stroke-width="2.2" paint-order="stroke" textLength="92.7" lengthAdjust="spacingAndGlyphs">CHECK</text>
</svg></div></body></html>
